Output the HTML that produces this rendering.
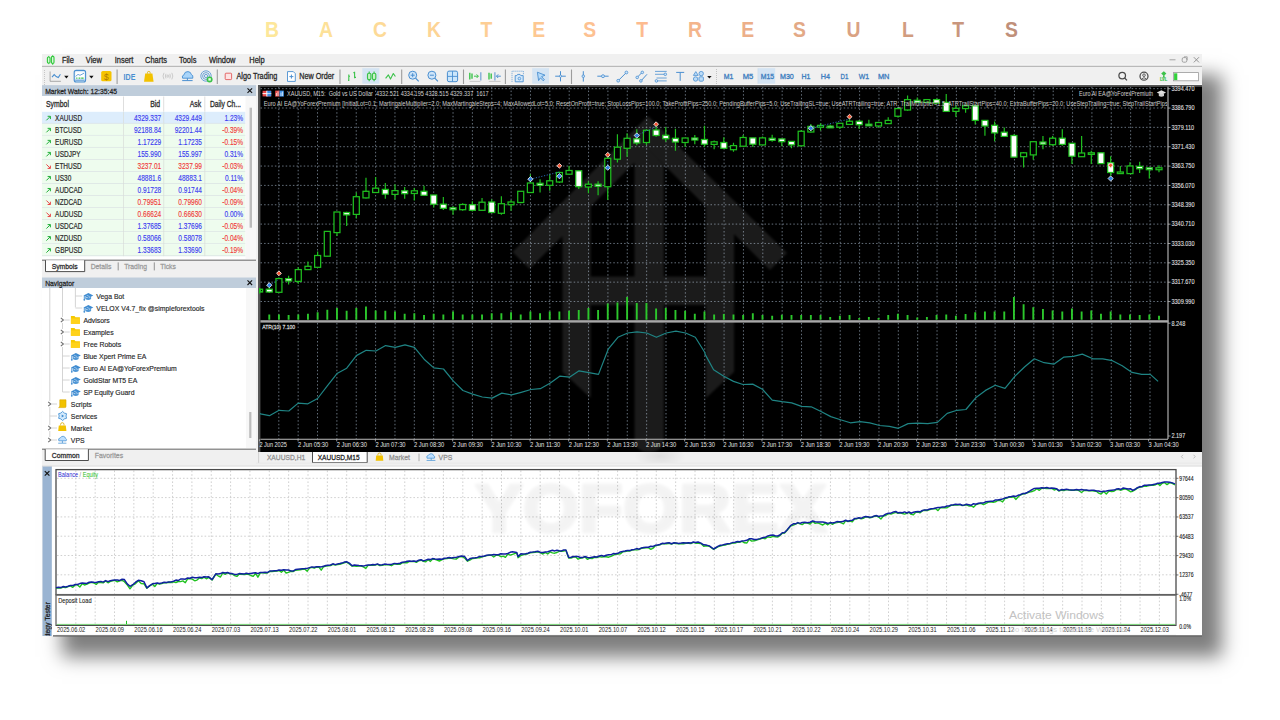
<!DOCTYPE html>
<html><head><meta charset="utf-8"><title>Backtest Results</title>
<style>
html,body{margin:0;padding:0;background:#fff;}
body{width:1280px;height:720px;position:relative;overflow:hidden;font-family:"Liberation Sans",sans-serif;}
#shadow{position:absolute;left:42px;top:54px;width:1160px;height:582px;background:#f0f0f0;box-shadow:20px 21px 18px 0px rgba(0,0,0,0.51);}
svg{position:absolute;left:0;top:0;}
text{font-family:"Liberation Sans",sans-serif;}
</style></head><body>
<div id="shadow"></div>
<svg width="1280" height="720" viewBox="0 0 1280 720">
<text transform="translate(272.05 36.7) scale(0.9 1)" font-size="21.5" font-weight="bold" fill="rgb(253,231,154)" text-anchor="middle">B</text>
<text transform="translate(326.10 36.7) scale(0.9 1)" font-size="21.5" font-weight="bold" fill="rgb(253,225,152)" text-anchor="middle">A</text>
<text transform="translate(379.90 36.7) scale(0.9 1)" font-size="21.5" font-weight="bold" fill="rgb(253,218,151)" text-anchor="middle">C</text>
<text transform="translate(433.95 36.7) scale(0.9 1)" font-size="21.5" font-weight="bold" fill="rgb(253,212,149)" text-anchor="middle">K</text>
<text transform="translate(486.35 36.7) scale(0.9 1)" font-size="21.5" font-weight="bold" fill="rgb(253,206,148)" text-anchor="middle">T</text>
<text transform="translate(538.80 36.7) scale(0.9 1)" font-size="21.5" font-weight="bold" fill="rgb(253,200,146)" text-anchor="middle">E</text>
<text transform="translate(589.60 36.7) scale(0.9 1)" font-size="21.5" font-weight="bold" fill="rgb(253,193,145)" text-anchor="middle">S</text>
<text transform="translate(642.20 36.7) scale(0.9 1)" font-size="21.5" font-weight="bold" fill="rgb(253,187,143)" text-anchor="middle">T</text>
<text transform="translate(695.10 36.7) scale(0.9 1)" font-size="21.5" font-weight="bold" fill="rgb(244,181,140)" text-anchor="middle">R</text>
<text transform="translate(747.75 36.7) scale(0.9 1)" font-size="21.5" font-weight="bold" fill="rgb(236,175,137)" text-anchor="middle">E</text>
<text transform="translate(799.55 36.7) scale(0.9 1)" font-size="21.5" font-weight="bold" fill="rgb(227,169,134)" text-anchor="middle">S</text>
<text transform="translate(853.45 36.7) scale(0.9 1)" font-size="21.5" font-weight="bold" fill="rgb(218,162,131)" text-anchor="middle">U</text>
<text transform="translate(907.90 36.7) scale(0.9 1)" font-size="21.5" font-weight="bold" fill="rgb(209,156,128)" text-anchor="middle">L</text>
<text transform="translate(958.20 36.7) scale(0.9 1)" font-size="21.5" font-weight="bold" fill="rgb(201,150,125)" text-anchor="middle">T</text>
<text transform="translate(1011.50 36.7) scale(0.9 1)" font-size="21.5" font-weight="bold" fill="rgb(192,144,122)" text-anchor="middle">S</text>
<rect x="42.00" y="54.00" width="1160.00" height="12.00" fill="#f0f0f0" />
<line x1="42.00" y1="65.10" x2="1202.00" y2="65.10" stroke="#fafafa" stroke-width="0.90" />
<line x1="42.00" y1="66.40" x2="1202.00" y2="66.40" stroke="#b9b9b9" stroke-width="1.10" />
<rect x="42.00" y="67.00" width="1160.00" height="17.20" fill="#f0f0f0" />
<line x1="42.00" y1="84.40" x2="1202.00" y2="84.40" stroke="#fbfbfb" stroke-width="0.80" />
<line x1="42.00" y1="85.00" x2="256.00" y2="85.00" stroke="#e0e0e0" stroke-width="0.60" />
<g stroke="#2fc93a" stroke-width="1.1" fill="#d9f7da"><rect x="47.4" y="57" width="2.6" height="6" rx="1.1"/><rect x="51.4" y="56.4" width="2.6" height="7" rx="1.1"/></g>
<line x1="48.70" y1="55.90" x2="48.70" y2="57.00" stroke="#2fc93a" stroke-width="0.80" />
<line x1="48.70" y1="63.00" x2="48.70" y2="64.20" stroke="#2fc93a" stroke-width="0.80" />
<line x1="52.70" y1="55.20" x2="52.70" y2="56.40" stroke="#2fc93a" stroke-width="0.80" />
<line x1="52.70" y1="63.40" x2="52.70" y2="65.00" stroke="#2fc93a" stroke-width="0.80" />
<text transform="translate(61.90 63.30) scale(0.900 1)" font-size="8.30" fill="#2a2a2a" text-anchor="start" stroke="#2a2a2a" stroke-width="0.28" >File</text>
<text transform="translate(85.80 63.30) scale(0.900 1)" font-size="8.30" fill="#2a2a2a" text-anchor="start" stroke="#2a2a2a" stroke-width="0.28" >View</text>
<text transform="translate(114.70 63.30) scale(0.900 1)" font-size="8.30" fill="#2a2a2a" text-anchor="start" stroke="#2a2a2a" stroke-width="0.28" >Insert</text>
<text transform="translate(145.00 63.30) scale(0.900 1)" font-size="8.30" fill="#2a2a2a" text-anchor="start" stroke="#2a2a2a" stroke-width="0.28" >Charts</text>
<text transform="translate(179.00 63.30) scale(0.900 1)" font-size="8.30" fill="#2a2a2a" text-anchor="start" stroke="#2a2a2a" stroke-width="0.28" >Tools</text>
<text transform="translate(209.00 63.30) scale(0.900 1)" font-size="8.30" fill="#2a2a2a" text-anchor="start" stroke="#2a2a2a" stroke-width="0.28" >Window</text>
<text transform="translate(249.30 63.30) scale(0.900 1)" font-size="8.30" fill="#2a2a2a" text-anchor="start" stroke="#2a2a2a" stroke-width="0.28" >Help</text>
<line x1="1169.50" y1="59.80" x2="1175.50" y2="59.80" stroke="#9a9a9a" stroke-width="0.90" />
<rect x="1182.2" y="57.6" width="4.6" height="4.6" rx="1.4" fill="none" stroke="#9a9a9a" stroke-width="0.9"/>
<path d="M1184 56.8h3.2v3.4" fill="none" stroke="#9a9a9a" stroke-width="0.8"/>
<line x1="1193.80" y1="57.20" x2="1199.00" y2="62.40" stroke="#8a8a8a" stroke-width="0.90" />
<line x1="1199.00" y1="57.20" x2="1193.80" y2="62.40" stroke="#8a8a8a" stroke-width="0.90" />
<rect x="44.20" y="70.00" width="0.80" height="0.80" fill="#b0b0b0" />
<rect x="44.20" y="72.00" width="0.80" height="0.80" fill="#b0b0b0" />
<rect x="44.20" y="74.00" width="0.80" height="0.80" fill="#b0b0b0" />
<rect x="44.20" y="76.00" width="0.80" height="0.80" fill="#b0b0b0" />
<rect x="44.20" y="78.00" width="0.80" height="0.80" fill="#b0b0b0" />
<rect x="44.20" y="80.00" width="0.80" height="0.80" fill="#b0b0b0" />
<rect x="44.20" y="82.00" width="0.80" height="0.80" fill="#b0b0b0" />
<rect x="44.20" y="84.00" width="0.80" height="0.80" fill="#b0b0b0" />
<path d="M50.1 71.5V81.3H60.9" fill="none" stroke="#8a8a8a" stroke-width="0.7"/>
<path d="M52 77.2L54.2 74.6L56.2 76.6L58.3 77.6L60.4 74.3" fill="none" stroke="#4a8fd0" stroke-width="1.1"/>
<path d="M64.2 75.8h4.4l-2.2 2.6z" fill="#111"/>
<rect x="74.2" y="70.4" width="11.4" height="11.6" rx="2" fill="#dbeaf7" stroke="#4a8fd0" stroke-width="1.1"/>
<rect x="75.40" y="72.20" width="9.00" height="6.40" fill="#ffffff" />
<path d="M75.6 76.4L78 74.4L80 75.3L84 73.2" fill="none" stroke="#4a8fd0" stroke-width="0.8"/>
<path d="M76.2 78.2h1.2M78.6 78.2h1.8M81.2 78.2h2.4" stroke="#3bc24a" stroke-width="1.2"/>
<rect x="75.20" y="79.60" width="9.40" height="1.60" fill="#7fb0e0" />
<path d="M89.2 75.8h4.4l-2.2 2.6z" fill="#111"/>
<rect x="101.2" y="71" width="10.3" height="10.3" rx="1.6" fill="#f5c400"/>
<text x="106.35" y="79.6" font-size="8.5" fill="#b07a00" text-anchor="middle">$</text>
<line x1="117.10" y1="69.50" x2="117.10" y2="84.00" stroke="#9c9c9c" stroke-width="1.10" />
<text transform="translate(123.6 79.6) scale(0.85 1)" font-size="8.3" font-weight="bold" fill="#4a8fd0">IDE</text>
<path d="M145.2 73.6h7.2l1.2 8.2h-9.6z" fill="#f2c200"/>
<path d="M147.4 73.6v-0.8a1.4 1.4 0 0 1 2.8 0v0.8" fill="none" stroke="#dcae00" stroke-width="0.8"/>
<g fill="none" stroke="#c0c0c0" stroke-width="0.8"><path d="M164 72.8q-2 3.2 0 6.6M166 73.8q-1.2 2.2 0 4.6M171.8 72.8q2 3.2 0 6.6M169.8 73.8q1.2 2.2 0 4.6"/><circle cx="167.9" cy="76.1" r="1.1"/></g>
<path d="M182.6 78.2q-1.2-2.6 1.4-3.4q0.6-3.4 4-3.2q2.8 0.2 3.4 3q2 0.4 1.4 3.6z" fill="#a9d5fa" stroke="#4a8fd0" stroke-width="0.9" stroke-linejoin="round"/>
<path d="M187.4 78.2v2.2M182.2 80.6h10.4" stroke="#4a8fd0" stroke-width="1"/>
<g fill="none" stroke="#4a8fd0" stroke-width="0.8"><circle cx="206" cy="76" r="5.2"/><circle cx="206" cy="76" r="3.4"/><circle cx="206" cy="76" r="1.6"/></g>
<circle cx="209.6" cy="79.4" r="3" fill="#3cc24a"/>
<rect x="208.40" y="78.20" width="2.40" height="2.40" fill="#e9ffe9" />
<line x1="217.30" y1="69.50" x2="217.30" y2="84.00" stroke="#9c9c9c" stroke-width="1.10" />
<rect x="225.2" y="73.2" width="6.4" height="6.4" rx="0.8" fill="#fde3e3" stroke="#e25b5b" stroke-width="0.9"/>
<text transform="translate(236.50 79.20) scale(0.890 1)" font-size="8.20" fill="#2a2a2a" text-anchor="start" stroke="#2a2a2a" stroke-width="0.28" >Algo Trading</text>
<path d="M287.5 71.6h5.8l2 2v7.8h-7.8z" fill="#fff" stroke="#4a8fd0" stroke-width="0.9"/>
<path d="M291.4 74.6v4M289.4 76.6h4" stroke="#4a8fd0" stroke-width="1"/>
<text transform="translate(299.20 79.20) scale(0.880 1)" font-size="8.20" fill="#2a2a2a" text-anchor="start" stroke="#2a2a2a" stroke-width="0.28" >New Order</text>
<line x1="340.00" y1="69.50" x2="340.00" y2="84.00" stroke="#9c9c9c" stroke-width="1.10" />
<path d="M348.8 74.5v6.5M348 80.2h0.8M348.8 76.2h1.2M354.6 71.8v6.5M353.4 72.6h1.2M354.6 77.4h1.4" fill="none" stroke="#3bc24a" stroke-width="1.1"/>
<rect x="362.30" y="68.20" width="17.00" height="15.50" fill="#d4e4f3" />
<g fill="#c6f2c8" stroke="#3bc24a" stroke-width="1.15"><rect x="367.5" y="73.2" width="3.4" height="6.4" rx="1.3"/><rect x="372.4" y="73.2" width="3.4" height="6.4" rx="1.3"/></g>
<path d="M369.2 71.6v1.8M369.2 79.6v1.6M374.1 71.6v1.8M374.1 79.6v1.6" stroke="#3bc24a" stroke-width="1.1"/>
<path d="M385.6 78.4L388.4 74.9L390.5 79.1L393.3 73.5L395.4 76.5" fill="none" stroke="#3bc24a" stroke-width="1.1" stroke-linejoin="round"/>
<line x1="401.70" y1="69.50" x2="401.70" y2="84.00" stroke="#9c9c9c" stroke-width="1.10" />
<circle cx="412.7" cy="75.2" r="4" fill="#cfe5f9" stroke="#4a8fd0" stroke-width="1"/>
<path d="M415.6 78.1L418.7 81.4" stroke="#4a8fd0" stroke-width="1.2"/>
<path d="M410.7 75.2h4" stroke="#4a8fd0" stroke-width="1"/>
<path d="M412.7 73.2v4" stroke="#4a8fd0" stroke-width="1"/>
<circle cx="431.9" cy="75.2" r="4" fill="#cfe5f9" stroke="#4a8fd0" stroke-width="1"/>
<path d="M434.8 78.1L437.9 81.4" stroke="#4a8fd0" stroke-width="1.2"/>
<path d="M429.9 75.2h4" stroke="#4a8fd0" stroke-width="1"/>
<rect x="447.4" y="71.1" width="10.2" height="10.6" rx="1.6" fill="#cbe6fb" stroke="#4a8fd0" stroke-width="1"/>
<path d="M452.5 71.1v10.6M447.4 76.4h10.2" stroke="#4a8fd0" stroke-width="0.9"/>
<line x1="463.50" y1="69.50" x2="463.50" y2="84.00" stroke="#9c9c9c" stroke-width="1.10" />
<g stroke="#3bc24a" stroke-width="1.4"><path d="M469.8 72.8v6.6M472 73.6v5.2"/></g>
<path d="M474 76.2h4.2M476.6 74.4l1.8 1.8l-1.8 1.8" fill="none" stroke="#3bc24a" stroke-width="1"/>
<line x1="480.80" y1="72.20" x2="480.80" y2="80.40" stroke="#7aa7d6" stroke-width="1.30" />
<line x1="469.60" y1="81.40" x2="480.40" y2="81.40" stroke="#c8c8c8" stroke-width="1.00" />
<g stroke="#3bc24a" stroke-width="1.4"><path d="M489 72.8v6.6M491.2 73.6v5.2"/></g>
<line x1="494.90" y1="72.20" x2="494.90" y2="80.40" stroke="#7aa7d6" stroke-width="1.30" />
<path d="M500.8 76.2h-4.2M498.2 74.4l-1.8 1.8l1.8 1.8" fill="none" stroke="#4a8fd0" stroke-width="1"/>
<line x1="488.80" y1="81.40" x2="500.60" y2="81.40" stroke="#c8c8c8" stroke-width="1.00" />
<line x1="505.40" y1="69.50" x2="505.40" y2="84.00" stroke="#9c9c9c" stroke-width="1.10" />
<path d="M512 81.8v-10.6h11.4v3" fill="none" stroke="#4a8fd0" stroke-width="0.8" stroke-dasharray="1 1"/>
<path d="M515.2 75.6h1.6l0.8-1.2h2.4l0.8 1.2h2.4v6.2h-8z" fill="#d3e8fb" stroke="#4a8fd0" stroke-width="0.9"/>
<circle cx="519.4" cy="78.6" r="1.3" fill="none" stroke="#4a8fd0" stroke-width="0.8"/>
<rect x="532.20" y="68.20" width="16.80" height="15.50" fill="#d4e4f3" />
<path d="M537.4 72.2L545 75.2L541.6 76.6L544.4 79.8L543.2 80.8L540.4 77.8L538.6 80.6z" fill="#b7dcfa" stroke="#4a8fd0" stroke-width="0.9" stroke-linejoin="round"/>
<path d="M560.5 71.2v10.2M555.2 76.2h10.6" stroke="#4a8fd0" stroke-width="1"/>
<circle cx="560.5" cy="76.2" r="1.1" fill="#f0f0f0" stroke="#4a8fd0" stroke-width="0.8"/>
<line x1="571.50" y1="69.50" x2="571.50" y2="84.00" stroke="#9c9c9c" stroke-width="1.10" />
<line x1="583.30" y1="71.20" x2="583.30" y2="81.60" stroke="#4a8fd0" stroke-width="1.00" />
<circle cx="583.3" cy="76.2" r="1.3" fill="#cfe5f9" stroke="#4a8fd0" stroke-width="0.8"/>
<line x1="597.30" y1="76.20" x2="608.60" y2="76.20" stroke="#4a8fd0" stroke-width="1.00" />
<circle cx="603" cy="76.2" r="1.5" fill="#cfe5f9" stroke="#4a8fd0" stroke-width="0.8"/>
<line x1="618.20" y1="80.70" x2="626.40" y2="72.50" stroke="#4a8fd0" stroke-width="1.00" />
<g fill="#cfe5f9" stroke="#4a8fd0" stroke-width="0.8"><circle cx="618.2" cy="80.7" r="1.4"/><circle cx="626.4" cy="72.5" r="1.4"/></g>
<path d="M637.2 77.4L642.3 72.2M640.9 81L647 74.3" stroke="#4a8fd0" stroke-width="1"/>
<g fill="#cfe5f9" stroke="#4a8fd0" stroke-width="0.8"><circle cx="637.2" cy="77.4" r="1.3"/><circle cx="642.3" cy="72.4" r="1.3"/><circle cx="640.9" cy="80.9" r="1.3"/></g>
<path d="M655 71.4h11.7M655 74.3h10M656.5 78h10.2M656.5 80.9h10.2" stroke="#4a8fd0" stroke-width="0.8"/>
<g fill="#cfe5f9" stroke="#4a8fd0" stroke-width="0.8"><circle cx="665.3" cy="74.3" r="1.3"/><circle cx="656.4" cy="80.9" r="1.3"/></g>
<path d="M676.2 72.4h8M680.2 72.4v8.4" stroke="#4a8fd0" stroke-width="1"/>
<g fill="#bcdcf8" stroke="#4a8fd0" stroke-width="0.8"><path d="M695.8 71.6l2.4 3.8h-4.8z"/><circle cx="701.2" cy="73.6" r="2.2"/><circle cx="695.6" cy="79" r="2.2"/><rect x="699" y="76.8" width="4.4" height="4.4" rx="1"/></g>
<path d="M707.2 76.0h4.4l-2.2 2.6z" fill="#111"/>
<rect x="716.10" y="69.00" width="0.70" height="0.80" fill="#a0a0a0" />
<rect x="716.10" y="71.00" width="0.70" height="0.80" fill="#a0a0a0" />
<rect x="716.10" y="73.00" width="0.70" height="0.80" fill="#a0a0a0" />
<rect x="716.10" y="75.00" width="0.70" height="0.80" fill="#a0a0a0" />
<rect x="716.10" y="77.00" width="0.70" height="0.80" fill="#a0a0a0" />
<rect x="716.10" y="79.00" width="0.70" height="0.80" fill="#a0a0a0" />
<rect x="716.10" y="81.00" width="0.70" height="0.80" fill="#a0a0a0" />
<rect x="716.10" y="83.00" width="0.70" height="0.80" fill="#a0a0a0" />
<rect x="757.90" y="68.20" width="17.30" height="15.50" fill="#d4e4f3" />
<line x1="757.90" y1="68.20" x2="757.90" y2="83.70" stroke="#c8d8e8" stroke-width="0.50" />
<text x="723.70" y="79.3" font-size="8" fill="#3f7fc0" stroke="#3f7fc0" stroke-width="0.35" textLength="9.60" lengthAdjust="spacingAndGlyphs">M1</text>
<text x="742.80" y="79.3" font-size="8" fill="#3f7fc0" stroke="#3f7fc0" stroke-width="0.35" textLength="10.50" lengthAdjust="spacingAndGlyphs">M5</text>
<text x="760.70" y="79.3" font-size="8" fill="#3f7fc0" stroke="#3f7fc0" stroke-width="0.35" textLength="13.30" lengthAdjust="spacingAndGlyphs">M15</text>
<text x="780.00" y="79.3" font-size="8" fill="#3f7fc0" stroke="#3f7fc0" stroke-width="0.35" textLength="13.80" lengthAdjust="spacingAndGlyphs">M30</text>
<text x="801.50" y="79.3" font-size="8" fill="#3f7fc0" stroke="#3f7fc0" stroke-width="0.35" textLength="8.90" lengthAdjust="spacingAndGlyphs">H1</text>
<text x="820.80" y="79.3" font-size="8" fill="#3f7fc0" stroke="#3f7fc0" stroke-width="0.35" textLength="9.20" lengthAdjust="spacingAndGlyphs">H4</text>
<text x="840.50" y="79.3" font-size="8" fill="#3f7fc0" stroke="#3f7fc0" stroke-width="0.35" textLength="7.80" lengthAdjust="spacingAndGlyphs">D1</text>
<text x="858.70" y="79.3" font-size="8" fill="#3f7fc0" stroke="#3f7fc0" stroke-width="0.35" textLength="10.30" lengthAdjust="spacingAndGlyphs">W1</text>
<text x="877.90" y="79.3" font-size="8" fill="#3f7fc0" stroke="#3f7fc0" stroke-width="0.35" textLength="11.50" lengthAdjust="spacingAndGlyphs">MN</text>
<circle cx="1122.2" cy="75.6" r="3.3" fill="none" stroke="#4a4a4a" stroke-width="1.25"/>
<line x1="1124.60" y1="78.00" x2="1127.00" y2="80.40" stroke="#4a4a4a" stroke-width="1.30" />
<circle cx="1144" cy="76.2" r="4.0" fill="none" stroke="#505050" stroke-width="1.3"/>
<circle cx="1144" cy="75.2" r="1.3" fill="none" stroke="#505050" stroke-width="0.9"/>
<path d="M1141.8 78.8q2.2-2.2 4.4 0" fill="none" stroke="#505050" stroke-width="0.9"/>
<path d="M1163.8 71.2l2.6 2.4l-2.6 2.4l-2.6-2.4z" fill="#3cc24a"/>
<rect x="1163.00" y="75.40" width="1.60" height="2.20" fill="#3cc24a" />
<text transform="translate(1160.0 81.0) scale(0.82 1)" font-size="4.8" font-weight="bold" fill="#3cc24a" stroke="#3cc24a" stroke-width="0.2">LVL</text>
<rect x="1173.4" y="72.6" width="25.2" height="8.2" fill="#ffffff" stroke="#9a9a9a" stroke-width="0.8"/>
<rect x="1174.10" y="73.30" width="3.20" height="6.80" fill="#33d13c" />
<rect x="42.00" y="85.20" width="214.00" height="10.80" fill="#bfcddb" />
<text transform="translate(45.20 94.00) scale(0.850 1)" font-size="8.00" fill="#262626" text-anchor="start" stroke="#262626" stroke-width="0.28" >Market Watch: 12:35:45</text>
<path d="M247.5 88.3L252.1 92.9M252.1 88.3L247.5 92.9" stroke="#111" stroke-width="1.10"/>
<rect x="42.00" y="96.00" width="214.00" height="163.60" fill="#ffffff" />
<rect x="42.00" y="96.00" width="203.50" height="15.80" fill="#ffffff" />
<line x1="123.50" y1="96.50" x2="123.50" y2="111.60" stroke="#d6d6d6" stroke-width="0.80" />
<line x1="163.70" y1="96.50" x2="163.70" y2="111.60" stroke="#d6d6d6" stroke-width="0.80" />
<line x1="204.80" y1="96.50" x2="204.80" y2="111.60" stroke="#d6d6d6" stroke-width="0.80" />
<text transform="translate(46.00 107.10) scale(0.840 1)" font-size="8.20" fill="#2a2a2a" text-anchor="start" stroke="#2a2a2a" stroke-width="0.28" >Symbol</text>
<text transform="translate(160.10 107.10) scale(0.840 1)" font-size="8.20" fill="#2a2a2a" text-anchor="end" stroke="#2a2a2a" stroke-width="0.28" >Bid</text>
<text transform="translate(201.20 107.10) scale(0.840 1)" font-size="8.20" fill="#2a2a2a" text-anchor="end" stroke="#2a2a2a" stroke-width="0.28" >Ask</text>
<text transform="translate(209.90 107.10) scale(0.820 1)" font-size="8.20" fill="#2a2a2a" text-anchor="start" stroke="#2a2a2a" stroke-width="0.28" >Daily Ch...</text>
<rect x="42.00" y="111.80" width="203.50" height="12.03" fill="#ddedfc" />
<line x1="42.00" y1="123.40" x2="245.50" y2="123.40" stroke="#d9dfe3" stroke-width="0.70" />
<line x1="123.50" y1="111.80" x2="123.50" y2="123.80" stroke="#d8ddd8" stroke-width="0.70" />
<line x1="163.70" y1="111.80" x2="163.70" y2="123.80" stroke="#d8ddd8" stroke-width="0.70" />
<line x1="204.80" y1="111.80" x2="204.80" y2="123.80" stroke="#d8ddd8" stroke-width="0.70" />
<path d="M46.4 120.30L50.2 116.50M47.6 116.30h2.8v2.8" fill="none" stroke="#22b03a" stroke-width="1"/>
<text transform="translate(55.10 120.90) scale(0.790 1)" font-size="8.20" fill="#2c2c2c" text-anchor="start" stroke="#2c2c2c" stroke-width="0.20" >XAUUSD</text>
<text transform="translate(161.20 120.90) scale(0.800 1)" font-size="8.20" fill="#3d3df0" text-anchor="end" stroke="#3d3df0" stroke-width="0.14" >4329.337</text>
<text transform="translate(202.00 120.90) scale(0.800 1)" font-size="8.20" fill="#3d3df0" text-anchor="end" stroke="#3d3df0" stroke-width="0.14" >4329.449</text>
<text transform="translate(243.00 120.90) scale(0.800 1)" font-size="8.20" fill="#3d3df0" text-anchor="end" stroke="#3d3df0" stroke-width="0.14" >1.23%</text>
<rect x="42.00" y="123.83" width="203.50" height="12.03" fill="#eefcee" />
<line x1="42.00" y1="135.43" x2="245.50" y2="135.43" stroke="#d9dfe3" stroke-width="0.70" />
<line x1="123.50" y1="123.83" x2="123.50" y2="135.83" stroke="#d8ddd8" stroke-width="0.70" />
<line x1="163.70" y1="123.83" x2="163.70" y2="135.83" stroke="#d8ddd8" stroke-width="0.70" />
<line x1="204.80" y1="123.83" x2="204.80" y2="135.83" stroke="#d8ddd8" stroke-width="0.70" />
<path d="M46.4 132.33L50.2 128.53M47.6 128.33h2.8v2.8" fill="none" stroke="#22b03a" stroke-width="1"/>
<text transform="translate(55.10 132.93) scale(0.790 1)" font-size="8.20" fill="#2c2c2c" text-anchor="start" stroke="#2c2c2c" stroke-width="0.20" >BTCUSD</text>
<text transform="translate(161.20 132.93) scale(0.800 1)" font-size="8.20" fill="#3d3df0" text-anchor="end" stroke="#3d3df0" stroke-width="0.14" >92188.84</text>
<text transform="translate(202.00 132.93) scale(0.800 1)" font-size="8.20" fill="#3d3df0" text-anchor="end" stroke="#3d3df0" stroke-width="0.14" >92201.44</text>
<text transform="translate(243.00 132.93) scale(0.800 1)" font-size="8.20" fill="#f03c3c" text-anchor="end" stroke="#f03c3c" stroke-width="0.14" >-0.39%</text>
<rect x="42.00" y="135.86" width="203.50" height="12.03" fill="#eefcee" />
<line x1="42.00" y1="147.46" x2="245.50" y2="147.46" stroke="#d9dfe3" stroke-width="0.70" />
<line x1="123.50" y1="135.86" x2="123.50" y2="147.86" stroke="#d8ddd8" stroke-width="0.70" />
<line x1="163.70" y1="135.86" x2="163.70" y2="147.86" stroke="#d8ddd8" stroke-width="0.70" />
<line x1="204.80" y1="135.86" x2="204.80" y2="147.86" stroke="#d8ddd8" stroke-width="0.70" />
<path d="M46.4 144.36L50.2 140.56M47.6 140.36h2.8v2.8" fill="none" stroke="#22b03a" stroke-width="1"/>
<text transform="translate(55.10 144.96) scale(0.790 1)" font-size="8.20" fill="#2c2c2c" text-anchor="start" stroke="#2c2c2c" stroke-width="0.20" >EURUSD</text>
<text transform="translate(161.20 144.96) scale(0.800 1)" font-size="8.20" fill="#3d3df0" text-anchor="end" stroke="#3d3df0" stroke-width="0.14" >1.17229</text>
<text transform="translate(202.00 144.96) scale(0.800 1)" font-size="8.20" fill="#3d3df0" text-anchor="end" stroke="#3d3df0" stroke-width="0.14" >1.17235</text>
<text transform="translate(243.00 144.96) scale(0.800 1)" font-size="8.20" fill="#f03c3c" text-anchor="end" stroke="#f03c3c" stroke-width="0.14" >-0.15%</text>
<rect x="42.00" y="147.89" width="203.50" height="12.03" fill="#eefcee" />
<line x1="42.00" y1="159.49" x2="245.50" y2="159.49" stroke="#d9dfe3" stroke-width="0.70" />
<line x1="123.50" y1="147.89" x2="123.50" y2="159.89" stroke="#d8ddd8" stroke-width="0.70" />
<line x1="163.70" y1="147.89" x2="163.70" y2="159.89" stroke="#d8ddd8" stroke-width="0.70" />
<line x1="204.80" y1="147.89" x2="204.80" y2="159.89" stroke="#d8ddd8" stroke-width="0.70" />
<path d="M46.4 156.39L50.2 152.59M47.6 152.39h2.8v2.8" fill="none" stroke="#22b03a" stroke-width="1"/>
<text transform="translate(55.10 156.99) scale(0.790 1)" font-size="8.20" fill="#2c2c2c" text-anchor="start" stroke="#2c2c2c" stroke-width="0.20" >USDJPY</text>
<text transform="translate(161.20 156.99) scale(0.800 1)" font-size="8.20" fill="#3d3df0" text-anchor="end" stroke="#3d3df0" stroke-width="0.14" >155.990</text>
<text transform="translate(202.00 156.99) scale(0.800 1)" font-size="8.20" fill="#3d3df0" text-anchor="end" stroke="#3d3df0" stroke-width="0.14" >155.997</text>
<text transform="translate(243.00 156.99) scale(0.800 1)" font-size="8.20" fill="#3d3df0" text-anchor="end" stroke="#3d3df0" stroke-width="0.14" >0.31%</text>
<rect x="42.00" y="159.92" width="203.50" height="12.03" fill="#eefcee" />
<line x1="42.00" y1="171.52" x2="245.50" y2="171.52" stroke="#d9dfe3" stroke-width="0.70" />
<line x1="123.50" y1="159.92" x2="123.50" y2="171.92" stroke="#d8ddd8" stroke-width="0.70" />
<line x1="163.70" y1="159.92" x2="163.70" y2="171.92" stroke="#d8ddd8" stroke-width="0.70" />
<line x1="204.80" y1="159.92" x2="204.80" y2="171.92" stroke="#d8ddd8" stroke-width="0.70" />
<path d="M46.4 164.42L50.2 168.22M50.4 168.42v-2.8M50.4 168.42h-2.8" fill="none" stroke="#e94848" stroke-width="1"/>
<text transform="translate(55.10 169.02) scale(0.790 1)" font-size="8.20" fill="#2c2c2c" text-anchor="start" stroke="#2c2c2c" stroke-width="0.20" >ETHUSD</text>
<text transform="translate(161.20 169.02) scale(0.800 1)" font-size="8.20" fill="#f03c3c" text-anchor="end" stroke="#f03c3c" stroke-width="0.14" >3237.01</text>
<text transform="translate(202.00 169.02) scale(0.800 1)" font-size="8.20" fill="#f03c3c" text-anchor="end" stroke="#f03c3c" stroke-width="0.14" >3237.99</text>
<text transform="translate(243.00 169.02) scale(0.800 1)" font-size="8.20" fill="#f03c3c" text-anchor="end" stroke="#f03c3c" stroke-width="0.14" >-0.03%</text>
<rect x="42.00" y="171.95" width="203.50" height="12.03" fill="#eefcee" />
<line x1="42.00" y1="183.55" x2="245.50" y2="183.55" stroke="#d9dfe3" stroke-width="0.70" />
<line x1="123.50" y1="171.95" x2="123.50" y2="183.95" stroke="#d8ddd8" stroke-width="0.70" />
<line x1="163.70" y1="171.95" x2="163.70" y2="183.95" stroke="#d8ddd8" stroke-width="0.70" />
<line x1="204.80" y1="171.95" x2="204.80" y2="183.95" stroke="#d8ddd8" stroke-width="0.70" />
<path d="M46.4 180.45L50.2 176.65M47.6 176.45h2.8v2.8" fill="none" stroke="#22b03a" stroke-width="1"/>
<text transform="translate(55.10 181.05) scale(0.790 1)" font-size="8.20" fill="#2c2c2c" text-anchor="start" stroke="#2c2c2c" stroke-width="0.20" >US30</text>
<text transform="translate(161.20 181.05) scale(0.800 1)" font-size="8.20" fill="#3d3df0" text-anchor="end" stroke="#3d3df0" stroke-width="0.14" >48881.6</text>
<text transform="translate(202.00 181.05) scale(0.800 1)" font-size="8.20" fill="#3d3df0" text-anchor="end" stroke="#3d3df0" stroke-width="0.14" >48883.1</text>
<text transform="translate(243.00 181.05) scale(0.800 1)" font-size="8.20" fill="#3d3df0" text-anchor="end" stroke="#3d3df0" stroke-width="0.14" >0.11%</text>
<rect x="42.00" y="183.98" width="203.50" height="12.03" fill="#eefcee" />
<line x1="42.00" y1="195.58" x2="245.50" y2="195.58" stroke="#d9dfe3" stroke-width="0.70" />
<line x1="123.50" y1="183.98" x2="123.50" y2="195.98" stroke="#d8ddd8" stroke-width="0.70" />
<line x1="163.70" y1="183.98" x2="163.70" y2="195.98" stroke="#d8ddd8" stroke-width="0.70" />
<line x1="204.80" y1="183.98" x2="204.80" y2="195.98" stroke="#d8ddd8" stroke-width="0.70" />
<path d="M46.4 192.48L50.2 188.68M47.6 188.48h2.8v2.8" fill="none" stroke="#22b03a" stroke-width="1"/>
<text transform="translate(55.10 193.08) scale(0.790 1)" font-size="8.20" fill="#2c2c2c" text-anchor="start" stroke="#2c2c2c" stroke-width="0.20" >AUDCAD</text>
<text transform="translate(161.20 193.08) scale(0.800 1)" font-size="8.20" fill="#3d3df0" text-anchor="end" stroke="#3d3df0" stroke-width="0.14" >0.91728</text>
<text transform="translate(202.00 193.08) scale(0.800 1)" font-size="8.20" fill="#3d3df0" text-anchor="end" stroke="#3d3df0" stroke-width="0.14" >0.91744</text>
<text transform="translate(243.00 193.08) scale(0.800 1)" font-size="8.20" fill="#f03c3c" text-anchor="end" stroke="#f03c3c" stroke-width="0.14" >-0.04%</text>
<rect x="42.00" y="196.01" width="203.50" height="12.03" fill="#eefcee" />
<line x1="42.00" y1="207.61" x2="245.50" y2="207.61" stroke="#d9dfe3" stroke-width="0.70" />
<line x1="123.50" y1="196.01" x2="123.50" y2="208.01" stroke="#d8ddd8" stroke-width="0.70" />
<line x1="163.70" y1="196.01" x2="163.70" y2="208.01" stroke="#d8ddd8" stroke-width="0.70" />
<line x1="204.80" y1="196.01" x2="204.80" y2="208.01" stroke="#d8ddd8" stroke-width="0.70" />
<path d="M46.4 200.51L50.2 204.31M50.4 204.51v-2.8M50.4 204.51h-2.8" fill="none" stroke="#e94848" stroke-width="1"/>
<text transform="translate(55.10 205.11) scale(0.790 1)" font-size="8.20" fill="#2c2c2c" text-anchor="start" stroke="#2c2c2c" stroke-width="0.20" >NZDCAD</text>
<text transform="translate(161.20 205.11) scale(0.800 1)" font-size="8.20" fill="#f03c3c" text-anchor="end" stroke="#f03c3c" stroke-width="0.14" >0.79951</text>
<text transform="translate(202.00 205.11) scale(0.800 1)" font-size="8.20" fill="#f03c3c" text-anchor="end" stroke="#f03c3c" stroke-width="0.14" >0.79960</text>
<text transform="translate(243.00 205.11) scale(0.800 1)" font-size="8.20" fill="#f03c3c" text-anchor="end" stroke="#f03c3c" stroke-width="0.14" >-0.09%</text>
<rect x="42.00" y="208.04" width="203.50" height="12.03" fill="#eefcee" />
<line x1="42.00" y1="219.64" x2="245.50" y2="219.64" stroke="#d9dfe3" stroke-width="0.70" />
<line x1="123.50" y1="208.04" x2="123.50" y2="220.04" stroke="#d8ddd8" stroke-width="0.70" />
<line x1="163.70" y1="208.04" x2="163.70" y2="220.04" stroke="#d8ddd8" stroke-width="0.70" />
<line x1="204.80" y1="208.04" x2="204.80" y2="220.04" stroke="#d8ddd8" stroke-width="0.70" />
<path d="M46.4 212.54L50.2 216.34M50.4 216.54v-2.8M50.4 216.54h-2.8" fill="none" stroke="#e94848" stroke-width="1"/>
<text transform="translate(55.10 217.14) scale(0.790 1)" font-size="8.20" fill="#2c2c2c" text-anchor="start" stroke="#2c2c2c" stroke-width="0.20" >AUDUSD</text>
<text transform="translate(161.20 217.14) scale(0.800 1)" font-size="8.20" fill="#f03c3c" text-anchor="end" stroke="#f03c3c" stroke-width="0.14" >0.66624</text>
<text transform="translate(202.00 217.14) scale(0.800 1)" font-size="8.20" fill="#f03c3c" text-anchor="end" stroke="#f03c3c" stroke-width="0.14" >0.66630</text>
<text transform="translate(243.00 217.14) scale(0.800 1)" font-size="8.20" fill="#3d3df0" text-anchor="end" stroke="#3d3df0" stroke-width="0.14" >0.00%</text>
<rect x="42.00" y="220.07" width="203.50" height="12.03" fill="#eefcee" />
<line x1="42.00" y1="231.67" x2="245.50" y2="231.67" stroke="#d9dfe3" stroke-width="0.70" />
<line x1="123.50" y1="220.07" x2="123.50" y2="232.07" stroke="#d8ddd8" stroke-width="0.70" />
<line x1="163.70" y1="220.07" x2="163.70" y2="232.07" stroke="#d8ddd8" stroke-width="0.70" />
<line x1="204.80" y1="220.07" x2="204.80" y2="232.07" stroke="#d8ddd8" stroke-width="0.70" />
<path d="M46.4 228.57L50.2 224.77M47.6 224.57h2.8v2.8" fill="none" stroke="#22b03a" stroke-width="1"/>
<text transform="translate(55.10 229.17) scale(0.790 1)" font-size="8.20" fill="#2c2c2c" text-anchor="start" stroke="#2c2c2c" stroke-width="0.20" >USDCAD</text>
<text transform="translate(161.20 229.17) scale(0.800 1)" font-size="8.20" fill="#3d3df0" text-anchor="end" stroke="#3d3df0" stroke-width="0.14" >1.37685</text>
<text transform="translate(202.00 229.17) scale(0.800 1)" font-size="8.20" fill="#3d3df0" text-anchor="end" stroke="#3d3df0" stroke-width="0.14" >1.37696</text>
<text transform="translate(243.00 229.17) scale(0.800 1)" font-size="8.20" fill="#f03c3c" text-anchor="end" stroke="#f03c3c" stroke-width="0.14" >-0.05%</text>
<rect x="42.00" y="232.10" width="203.50" height="12.03" fill="#eefcee" />
<line x1="42.00" y1="243.70" x2="245.50" y2="243.70" stroke="#d9dfe3" stroke-width="0.70" />
<line x1="123.50" y1="232.10" x2="123.50" y2="244.10" stroke="#d8ddd8" stroke-width="0.70" />
<line x1="163.70" y1="232.10" x2="163.70" y2="244.10" stroke="#d8ddd8" stroke-width="0.70" />
<line x1="204.80" y1="232.10" x2="204.80" y2="244.10" stroke="#d8ddd8" stroke-width="0.70" />
<path d="M46.4 240.60L50.2 236.80M47.6 236.60h2.8v2.8" fill="none" stroke="#22b03a" stroke-width="1"/>
<text transform="translate(55.10 241.20) scale(0.790 1)" font-size="8.20" fill="#2c2c2c" text-anchor="start" stroke="#2c2c2c" stroke-width="0.20" >NZDUSD</text>
<text transform="translate(161.20 241.20) scale(0.800 1)" font-size="8.20" fill="#3d3df0" text-anchor="end" stroke="#3d3df0" stroke-width="0.14" >0.58066</text>
<text transform="translate(202.00 241.20) scale(0.800 1)" font-size="8.20" fill="#3d3df0" text-anchor="end" stroke="#3d3df0" stroke-width="0.14" >0.58078</text>
<text transform="translate(243.00 241.20) scale(0.800 1)" font-size="8.20" fill="#f03c3c" text-anchor="end" stroke="#f03c3c" stroke-width="0.14" >-0.04%</text>
<rect x="42.00" y="244.13" width="203.50" height="12.03" fill="#eefcee" />
<line x1="42.00" y1="255.73" x2="245.50" y2="255.73" stroke="#d9dfe3" stroke-width="0.70" />
<line x1="123.50" y1="244.13" x2="123.50" y2="256.13" stroke="#d8ddd8" stroke-width="0.70" />
<line x1="163.70" y1="244.13" x2="163.70" y2="256.13" stroke="#d8ddd8" stroke-width="0.70" />
<line x1="204.80" y1="244.13" x2="204.80" y2="256.13" stroke="#d8ddd8" stroke-width="0.70" />
<path d="M46.4 252.63L50.2 248.83M47.6 248.63h2.8v2.8" fill="none" stroke="#22b03a" stroke-width="1"/>
<text transform="translate(55.10 253.23) scale(0.790 1)" font-size="8.20" fill="#2c2c2c" text-anchor="start" stroke="#2c2c2c" stroke-width="0.20" >GBPUSD</text>
<text transform="translate(161.20 253.23) scale(0.800 1)" font-size="8.20" fill="#3d3df0" text-anchor="end" stroke="#3d3df0" stroke-width="0.14" >1.33683</text>
<text transform="translate(202.00 253.23) scale(0.800 1)" font-size="8.20" fill="#3d3df0" text-anchor="end" stroke="#3d3df0" stroke-width="0.14" >1.33690</text>
<text transform="translate(243.00 253.23) scale(0.800 1)" font-size="8.20" fill="#f03c3c" text-anchor="end" stroke="#f03c3c" stroke-width="0.14" >-0.19%</text>
<rect x="249.60" y="107.70" width="2.40" height="120.00" fill="#c8c8c8" />
<rect x="245.50" y="96.00" width="10.50" height="163.60" fill="#f7f7f7" />
<rect x="249.60" y="107.70" width="2.40" height="120.00" fill="#bcbcbc" />
<rect x="42.00" y="259.60" width="214.00" height="14.00" fill="#f0f0f0" />
<line x1="42.00" y1="260.20" x2="256.00" y2="260.20" stroke="#5a5a5a" stroke-width="0.90" />
<path d="M45.5 260.2V271.6H84.7V260.2" fill="#ffffff" stroke="#3a3a3a" stroke-width="0.9"/>
<text transform="translate(51.70 268.70) scale(0.850 1)" font-size="8.00" fill="#2a2a2a" text-anchor="start" stroke="#2a2a2a" stroke-width="0.28" >Symbols</text>
<text transform="translate(90.70 268.70) scale(0.850 1)" font-size="8.00" fill="#9a9a9a" text-anchor="start" stroke="#9a9a9a" stroke-width="0.28" >Details</text>
<line x1="118.20" y1="262.40" x2="118.20" y2="270.40" stroke="#7a7a7a" stroke-width="0.80" />
<text transform="translate(124.20 268.70) scale(0.850 1)" font-size="8.00" fill="#9a9a9a" text-anchor="start" stroke="#9a9a9a" stroke-width="0.28" >Trading</text>
<line x1="154.30" y1="262.40" x2="154.30" y2="270.40" stroke="#7a7a7a" stroke-width="0.80" />
<text transform="translate(160.30 268.70) scale(0.850 1)" font-size="8.00" fill="#9a9a9a" text-anchor="start" stroke="#9a9a9a" stroke-width="0.28" >Ticks</text>
<rect x="42.00" y="277.50" width="214.00" height="10.50" fill="#bfcddb" />
<text transform="translate(45.20 286.20) scale(0.850 1)" font-size="8.00" fill="#262626" text-anchor="start" stroke="#262626" stroke-width="0.28" >Navigator</text>
<path d="M247.5 280.4L252.1 285.0M252.1 280.4L247.5 285.0" stroke="#111" stroke-width="1.10"/>
<rect x="42.00" y="288.00" width="214.00" height="160.50" fill="#ffffff" />
<rect x="246.00" y="288.00" width="10.00" height="160.50" fill="#f7f7f7" />
<rect x="249.20" y="412.00" width="2.20" height="26.00" fill="#bcbcbc" />
<line x1="49.8" y1="288.0" x2="49.8" y2="440.0" stroke="#cfcfcf" stroke-width="0.9"/>
<line x1="62.5" y1="288.0" x2="62.5" y2="392.0" stroke="#cfcfcf" stroke-width="0.9"/>
<line x1="75.4" y1="288.0" x2="75.4" y2="307.4" stroke="#cfcfcf" stroke-width="0.9"/>
<line x1="75.4" y1="296.0" x2="82.2" y2="296.0" stroke="#cfcfcf" stroke-width="0.9"/>
<path d="M85.3 296.4q2.8 3 5.8 0v2.6q-2.9 2.2-5.8 0z" fill="#4f97d6"/>
<path d="M83.5 295.4l4.9-2.5l4.9 2.5l-4.9 2.5z" fill="#3f8bd0"/>
<path d="M86.6 295.2l3.2 1.5" stroke="#cfe6fa" stroke-width="0.6"/>
<line x1="84.30" y1="295.60" x2="84.30" y2="299.60" stroke="#3f8bd0" stroke-width="0.90" />
<circle cx="84.3" cy="299.8" r="0.9" fill="#3f8bd0"/>
<text transform="translate(96.30 298.60) scale(0.860 1)" font-size="8.00" fill="#2a2a2a" text-anchor="start" stroke="#2a2a2a" stroke-width="0.18" >Vega Bot</text>
<line x1="75.4" y1="308.0" x2="82.2" y2="308.0" stroke="#cfcfcf" stroke-width="0.9"/>
<path d="M85.3 308.4q2.8 3 5.8 0v2.6q-2.9 2.2-5.8 0z" fill="#4f97d6"/>
<path d="M83.5 307.4l4.9-2.5l4.9 2.5l-4.9 2.5z" fill="#3f8bd0"/>
<path d="M86.6 307.2l3.2 1.5" stroke="#cfe6fa" stroke-width="0.6"/>
<line x1="84.30" y1="307.60" x2="84.30" y2="311.60" stroke="#3f8bd0" stroke-width="0.90" />
<circle cx="84.3" cy="311.8" r="0.9" fill="#3f8bd0"/>
<text transform="translate(96.30 310.60) scale(0.860 1)" font-size="8.00" fill="#2a2a2a" text-anchor="start" stroke="#2a2a2a" stroke-width="0.18" >VELOX V4.7_fix @simpleforextools</text>
<line x1="62.5" y1="320.0" x2="69.7" y2="320.0" stroke="#cfcfcf" stroke-width="0.9"/>
<rect x="60.00" y="317.00" width="4.40" height="6.00" fill="#ffffff" />
<path d="M60.8 317.9l2.6 2.1l-2.6 2.1" fill="none" stroke="#707070" stroke-width="1.1"/>
<path d="M70.9 316.0h3.6l1 1.2h4.4v6.6h-9z" fill="#f5c800"/>
<rect x="70.90" y="318.40" width="9.00" height="5.40" fill="#ffd21a" />
<text transform="translate(83.40 322.60) scale(0.860 1)" font-size="8.00" fill="#2a2a2a" text-anchor="start" stroke="#2a2a2a" stroke-width="0.18" >Advisors</text>
<line x1="62.5" y1="332.0" x2="69.7" y2="332.0" stroke="#cfcfcf" stroke-width="0.9"/>
<rect x="60.00" y="329.00" width="4.40" height="6.00" fill="#ffffff" />
<path d="M60.8 329.9l2.6 2.1l-2.6 2.1" fill="none" stroke="#707070" stroke-width="1.1"/>
<path d="M70.9 328.0h3.6l1 1.2h4.4v6.6h-9z" fill="#f5c800"/>
<rect x="70.90" y="330.40" width="9.00" height="5.40" fill="#ffd21a" />
<text transform="translate(83.40 334.60) scale(0.860 1)" font-size="8.00" fill="#2a2a2a" text-anchor="start" stroke="#2a2a2a" stroke-width="0.18" >Examples</text>
<line x1="62.5" y1="344.0" x2="69.7" y2="344.0" stroke="#cfcfcf" stroke-width="0.9"/>
<rect x="60.00" y="341.00" width="4.40" height="6.00" fill="#ffffff" />
<path d="M60.8 341.9l2.6 2.1l-2.6 2.1" fill="none" stroke="#707070" stroke-width="1.1"/>
<path d="M70.9 340.0h3.6l1 1.2h4.4v6.6h-9z" fill="#f5c800"/>
<rect x="70.90" y="342.40" width="9.00" height="5.40" fill="#ffd21a" />
<text transform="translate(83.40 346.60) scale(0.860 1)" font-size="8.00" fill="#2a2a2a" text-anchor="start" stroke="#2a2a2a" stroke-width="0.18" >Free Robots</text>
<line x1="62.5" y1="356.0" x2="69.7" y2="356.0" stroke="#cfcfcf" stroke-width="0.9"/>
<path d="M72.8 356.4q2.8 3 5.8 0v2.6q-2.9 2.2-5.8 0z" fill="#4f97d6"/>
<path d="M71.0 355.4l4.9-2.5l4.9 2.5l-4.9 2.5z" fill="#3f8bd0"/>
<path d="M74.1 355.2l3.2 1.5" stroke="#cfe6fa" stroke-width="0.6"/>
<line x1="71.80" y1="355.60" x2="71.80" y2="359.60" stroke="#3f8bd0" stroke-width="0.90" />
<circle cx="71.8" cy="359.8" r="0.9" fill="#3f8bd0"/>
<text transform="translate(83.40 358.60) scale(0.860 1)" font-size="8.00" fill="#2a2a2a" text-anchor="start" stroke="#2a2a2a" stroke-width="0.18" >Blue Xpert Prime EA</text>
<line x1="62.5" y1="368.0" x2="69.7" y2="368.0" stroke="#cfcfcf" stroke-width="0.9"/>
<path d="M72.8 368.4q2.8 3 5.8 0v2.6q-2.9 2.2-5.8 0z" fill="#4f97d6"/>
<path d="M71.0 367.4l4.9-2.5l4.9 2.5l-4.9 2.5z" fill="#3f8bd0"/>
<path d="M74.1 367.2l3.2 1.5" stroke="#cfe6fa" stroke-width="0.6"/>
<line x1="71.80" y1="367.60" x2="71.80" y2="371.60" stroke="#3f8bd0" stroke-width="0.90" />
<circle cx="71.8" cy="371.8" r="0.9" fill="#3f8bd0"/>
<text transform="translate(83.40 370.60) scale(0.860 1)" font-size="8.00" fill="#2a2a2a" text-anchor="start" stroke="#2a2a2a" stroke-width="0.18" >Euro AI EA@YoForexPremium</text>
<line x1="62.5" y1="380.0" x2="69.7" y2="380.0" stroke="#cfcfcf" stroke-width="0.9"/>
<path d="M72.8 380.4q2.8 3 5.8 0v2.6q-2.9 2.2-5.8 0z" fill="#4f97d6"/>
<path d="M71.0 379.4l4.9-2.5l4.9 2.5l-4.9 2.5z" fill="#3f8bd0"/>
<path d="M74.1 379.2l3.2 1.5" stroke="#cfe6fa" stroke-width="0.6"/>
<line x1="71.80" y1="379.60" x2="71.80" y2="383.60" stroke="#3f8bd0" stroke-width="0.90" />
<circle cx="71.8" cy="383.8" r="0.9" fill="#3f8bd0"/>
<text transform="translate(83.40 382.60) scale(0.860 1)" font-size="8.00" fill="#2a2a2a" text-anchor="start" stroke="#2a2a2a" stroke-width="0.18" >GoldStar MT5 EA</text>
<line x1="62.5" y1="392.0" x2="69.7" y2="392.0" stroke="#cfcfcf" stroke-width="0.9"/>
<path d="M72.8 392.4q2.8 3 5.8 0v2.6q-2.9 2.2-5.8 0z" fill="#4f97d6"/>
<path d="M71.0 391.4l4.9-2.5l4.9 2.5l-4.9 2.5z" fill="#3f8bd0"/>
<path d="M74.1 391.2l3.2 1.5" stroke="#cfe6fa" stroke-width="0.6"/>
<line x1="71.80" y1="391.60" x2="71.80" y2="395.60" stroke="#3f8bd0" stroke-width="0.90" />
<circle cx="71.8" cy="395.8" r="0.9" fill="#3f8bd0"/>
<text transform="translate(83.40 394.60) scale(0.860 1)" font-size="8.00" fill="#2a2a2a" text-anchor="start" stroke="#2a2a2a" stroke-width="0.18" >SP Equity Guard</text>
<line x1="49.8" y1="404.0" x2="57.0" y2="404.0" stroke="#cfcfcf" stroke-width="0.9"/>
<rect x="47.40" y="401.00" width="4.40" height="6.00" fill="#ffffff" />
<path d="M48.2 401.9l2.6 2.1l-2.6 2.1" fill="none" stroke="#707070" stroke-width="1.1"/>
<path d="M59.8 399.8h6.2v6.6q0 1.2-1.2 1.2h-6.2q1.2-0.4 1.2-1.6z" fill="#f2c200" stroke="#d9a800" stroke-width="0.6"/>
<text transform="translate(70.80 406.60) scale(0.860 1)" font-size="8.00" fill="#2a2a2a" text-anchor="start" stroke="#2a2a2a" stroke-width="0.18" >Scripts</text>
<line x1="49.8" y1="416.0" x2="57.0" y2="416.0" stroke="#cfcfcf" stroke-width="0.9"/>
<polygon points="62.60,411.40 64.30,413.06 66.58,413.70 66.00,416.00 66.58,418.30 64.30,418.94 62.60,420.60 60.90,418.94 58.62,418.30 59.20,416.00 58.62,413.70 60.90,413.06" fill="#d4eafc" stroke="#4b95d6" stroke-width="0.9" stroke-linejoin="round"/>
<path d="M61.7 414.5l2.4 1.5l-2.4 1.5z" fill="#3f8bd0"/>
<text transform="translate(70.80 418.60) scale(0.860 1)" font-size="8.00" fill="#2a2a2a" text-anchor="start" stroke="#2a2a2a" stroke-width="0.18" >Services</text>
<line x1="49.8" y1="428.0" x2="57.0" y2="428.0" stroke="#cfcfcf" stroke-width="0.9"/>
<rect x="47.40" y="425.00" width="4.40" height="6.00" fill="#ffffff" />
<path d="M48.2 425.9l2.6 2.1l-2.6 2.1" fill="none" stroke="#707070" stroke-width="1.1"/>
<path d="M58.8 425.4h7l0.6 5.6h-8.2z" fill="#f2c200"/>
<path d="M60.6 425.4v-1a1.7 1.7 0 0 1 3.4 0v1" fill="none" stroke="#d8a800" stroke-width="0.8"/>
<text transform="translate(70.80 430.60) scale(0.860 1)" font-size="8.00" fill="#2a2a2a" text-anchor="start" stroke="#2a2a2a" stroke-width="0.18" >Market</text>
<line x1="49.8" y1="440.0" x2="57.0" y2="440.0" stroke="#cfcfcf" stroke-width="0.9"/>
<rect x="47.40" y="437.00" width="4.40" height="6.00" fill="#ffffff" />
<path d="M48.2 437.9l2.6 2.1l-2.6 2.1" fill="none" stroke="#707070" stroke-width="1.1"/>
<path d="M58.8 440.8a2.2 2.2 0 0 1 1.6-3a2.8 2.8 0 0 1 5.2 0.6a1.7 1.7 0 0 1 0.6 2.4z" fill="#bfe0ff" stroke="#4b95d6" stroke-width="0.8"/>
<path d="M62.4 440.8v2.2M58.2 443.2h8.2" stroke="#4b95d6" stroke-width="0.8"/>
<text transform="translate(70.80 442.60) scale(0.860 1)" font-size="8.00" fill="#2a2a2a" text-anchor="start" stroke="#2a2a2a" stroke-width="0.18" >VPS</text>
<rect x="42.00" y="448.60" width="214.00" height="14.00" fill="#f0f0f0" />
<line x1="42.00" y1="449.20" x2="256.00" y2="449.20" stroke="#5a5a5a" stroke-width="0.90" />
<path d="M45.2 449.2V460.5H88.4V449.2" fill="#ffffff" stroke="#3a3a3a" stroke-width="0.9"/>
<text transform="translate(51.80 457.60) scale(0.860 1)" font-size="8.00" fill="#2a2a2a" text-anchor="start" stroke="#2a2a2a" stroke-width="0.28" >Common</text>
<text transform="translate(94.80 457.60) scale(0.860 1)" font-size="8.00" fill="#9a9a9a" text-anchor="start" stroke="#9a9a9a" stroke-width="0.28" >Favorites</text>
<rect x="256.00" y="85.00" width="2.00" height="367.00" fill="#f0f0f0" />
<rect x="258.00" y="85.00" width="944.00" height="367.00" fill="#000000" />
<rect x="258.00" y="85.00" width="2.40" height="367.00" fill="#565656" />
<rect x="258.00" y="85.00" width="944.00" height="1.80" fill="#565656" />
<path d="M278.80 87V320M278.80 323V439M298.16 87V320M298.16 323V439M317.52 87V320M317.52 323V439M336.88 87V320M336.88 323V439M356.24 87V320M356.24 323V439M375.60 87V320M375.60 323V439M394.96 87V320M394.96 323V439M414.32 87V320M414.32 323V439M433.68 87V320M433.68 323V439M453.04 87V320M453.04 323V439M472.40 87V320M472.40 323V439M491.76 87V320M491.76 323V439M511.12 87V320M511.12 323V439M530.48 87V320M530.48 323V439M549.84 87V320M549.84 323V439M569.20 87V320M569.20 323V439M588.56 87V320M588.56 323V439M607.92 87V320M607.92 323V439M627.28 87V320M627.28 323V439M646.64 87V320M646.64 323V439M666.00 87V320M666.00 323V439M685.36 87V320M685.36 323V439M704.72 87V320M704.72 323V439M724.08 87V320M724.08 323V439M743.44 87V320M743.44 323V439M762.80 87V320M762.80 323V439M782.16 87V320M782.16 323V439M801.52 87V320M801.52 323V439M820.88 87V320M820.88 323V439M840.24 87V320M840.24 323V439M859.60 87V320M859.60 323V439M878.96 87V320M878.96 323V439M898.32 87V320M898.32 323V439M917.68 87V320M917.68 323V439M937.04 87V320M937.04 323V439M956.40 87V320M956.40 323V439M975.76 87V320M975.76 323V439M995.12 87V320M995.12 323V439M1014.48 87V320M1014.48 323V439M1033.84 87V320M1033.84 323V439M1053.20 87V320M1053.20 323V439M1072.56 87V320M1072.56 323V439M1091.92 87V320M1091.92 323V439M1111.28 87V320M1111.28 323V439M1130.64 87V320M1130.64 323V439M1150.00 87V320M1150.00 323V439" stroke="#717d8a" stroke-width="0.9" stroke-dasharray="1.5 2.1" fill="none"/>
<path d="M260.5 88.65H1168.0M260.5 108.00H1168.0M260.5 127.35H1168.0M260.5 146.70H1168.0M260.5 166.05H1168.0M260.5 185.40H1168.0M260.5 204.75H1168.0M260.5 224.10H1168.0M260.5 243.45H1168.0M260.5 262.80H1168.0M260.5 282.15H1168.0M260.5 301.50H1168.0" stroke="#717d8a" stroke-width="0.9" stroke-dasharray="1.5 2.1" fill="none"/>
<defs><filter id="lblur" x="-5%" y="-5%" width="110%" height="110%"><feGaussianBlur stdDeviation="0.8"/></filter></defs>
<path d="M512.6 252 L648 116 L787 253 L770 270 L734 234 L734 372 L706 398 L706 305 L663.8 305 L663.8 438 Q663.8 452 649 452 Q634.5 452 634.5 438 L634.5 305 L590.7 305 L590.7 398 L562.5 372 L562.5 236 L529.5 269 Z M648 149 L590.7 206.5 L590.7 276.5 L634.5 276.5 L634.5 162.5 Z M648 149 L663.8 165 L663.8 276.5 L706 276.5 L706 206.5 Z" fill="rgba(190,190,190,0.14)" fill-rule="evenodd" filter="url(#lblur)"/>
<line x1="1168.00" y1="86.80" x2="1168.00" y2="439.00" stroke="#bdbdbd" stroke-width="1.10" />
<line x1="1168.00" y1="88.70" x2="1170.50" y2="88.70" stroke="#bdbdbd" stroke-width="0.80" />
<text transform="translate(1171.40 90.90) scale(0.880 1)" font-size="6.30" fill="#d8d8d8" text-anchor="start" stroke="#d8d8d8" stroke-width="0.15" >3394.470</text>
<line x1="1168.00" y1="108.05" x2="1170.50" y2="108.05" stroke="#bdbdbd" stroke-width="0.80" />
<text transform="translate(1171.40 110.25) scale(0.880 1)" font-size="6.30" fill="#d8d8d8" text-anchor="start" stroke="#d8d8d8" stroke-width="0.15" >3386.790</text>
<line x1="1168.00" y1="127.40" x2="1170.50" y2="127.40" stroke="#bdbdbd" stroke-width="0.80" />
<text transform="translate(1171.40 129.60) scale(0.880 1)" font-size="6.30" fill="#d8d8d8" text-anchor="start" stroke="#d8d8d8" stroke-width="0.15" >3379.110</text>
<line x1="1168.00" y1="146.75" x2="1170.50" y2="146.75" stroke="#bdbdbd" stroke-width="0.80" />
<text transform="translate(1171.40 148.95) scale(0.880 1)" font-size="6.30" fill="#d8d8d8" text-anchor="start" stroke="#d8d8d8" stroke-width="0.15" >3371.430</text>
<line x1="1168.00" y1="166.10" x2="1170.50" y2="166.10" stroke="#bdbdbd" stroke-width="0.80" />
<text transform="translate(1171.40 168.30) scale(0.880 1)" font-size="6.30" fill="#d8d8d8" text-anchor="start" stroke="#d8d8d8" stroke-width="0.15" >3363.750</text>
<line x1="1168.00" y1="185.45" x2="1170.50" y2="185.45" stroke="#bdbdbd" stroke-width="0.80" />
<text transform="translate(1171.40 187.65) scale(0.880 1)" font-size="6.30" fill="#d8d8d8" text-anchor="start" stroke="#d8d8d8" stroke-width="0.15" >3356.070</text>
<line x1="1168.00" y1="204.80" x2="1170.50" y2="204.80" stroke="#bdbdbd" stroke-width="0.80" />
<text transform="translate(1171.40 207.00) scale(0.880 1)" font-size="6.30" fill="#d8d8d8" text-anchor="start" stroke="#d8d8d8" stroke-width="0.15" >3348.390</text>
<line x1="1168.00" y1="224.15" x2="1170.50" y2="224.15" stroke="#bdbdbd" stroke-width="0.80" />
<text transform="translate(1171.40 226.35) scale(0.880 1)" font-size="6.30" fill="#d8d8d8" text-anchor="start" stroke="#d8d8d8" stroke-width="0.15" >3340.710</text>
<line x1="1168.00" y1="243.50" x2="1170.50" y2="243.50" stroke="#bdbdbd" stroke-width="0.80" />
<text transform="translate(1171.40 245.70) scale(0.880 1)" font-size="6.30" fill="#d8d8d8" text-anchor="start" stroke="#d8d8d8" stroke-width="0.15" >3333.030</text>
<line x1="1168.00" y1="262.85" x2="1170.50" y2="262.85" stroke="#bdbdbd" stroke-width="0.80" />
<text transform="translate(1171.40 265.05) scale(0.880 1)" font-size="6.30" fill="#d8d8d8" text-anchor="start" stroke="#d8d8d8" stroke-width="0.15" >3325.350</text>
<line x1="1168.00" y1="282.20" x2="1170.50" y2="282.20" stroke="#bdbdbd" stroke-width="0.80" />
<text transform="translate(1171.40 284.40) scale(0.880 1)" font-size="6.30" fill="#d8d8d8" text-anchor="start" stroke="#d8d8d8" stroke-width="0.15" >3317.670</text>
<line x1="1168.00" y1="301.55" x2="1170.50" y2="301.55" stroke="#bdbdbd" stroke-width="0.80" />
<text transform="translate(1171.40 303.75) scale(0.880 1)" font-size="6.30" fill="#d8d8d8" text-anchor="start" stroke="#d8d8d8" stroke-width="0.15" >3309.990</text>
<rect x="260.40" y="320.20" width="908.10" height="2.40" fill="#a8a8a8" />
<path d="M259.60 288.00V293.50M269.27 287.50V293.00M278.94 277.50V293.00M288.61 275.80V284.50M298.28 267.30V283.80M307.96 261.40V269.60M317.63 251.50V268.00M327.30 231.40V256.20M336.97 212.00V236.00M346.64 211.80V226.00M356.31 192.50V218.40M365.98 177.80V198.40M375.65 177.10V192.50M385.32 183.00V198.80M394.99 184.20V199.60M404.67 187.00V198.80M414.34 188.00V200.50M424.01 185.80V195.30M433.68 195.00V207.50M443.35 197.00V210.00M453.02 206.30V214.70M462.69 203.30V210.80M472.36 201.30V211.60M482.03 198.00V210.80M491.70 199.20V213.00M501.38 196.30V214.70M511.05 200.00V210.80M520.72 191.30V203.30M530.39 174.20V192.50M540.06 179.20V192.50M549.73 174.20V190.80M559.40 171.70V183.00M569.07 165.80V174.20M578.74 170.80V189.00M588.41 181.30V193.30M598.09 181.30V195.30M607.76 156.70V200.00M617.43 134.20V162.50M627.10 133.30V156.70M636.77 129.20V145.30M646.44 129.20V145.00M656.11 125.80V136.70M665.78 127.00V141.70M675.45 128.70V150.80M685.12 138.00V147.00M694.80 135.00V144.20M704.47 125.80V147.00M714.14 140.60V149.30M723.81 137.20V149.00M733.48 142.80V151.80M743.15 135.10V146.20M752.82 137.90V147.00M762.49 136.50V144.90M772.16 134.70V141.70M781.83 138.90V146.20M791.50 141.40V148.30M801.18 130.00V146.20M810.85 124.00V132.40M820.52 123.30V130.60M830.19 124.50V127.80M839.86 123.30V128.90M849.53 118.50V124.70M859.20 120.30V128.90M868.87 119.70V125.60M878.54 121.80V127.40M888.22 117.20V123.60M897.89 107.50V117.60M907.56 95.40V110.70M917.23 97.50V102.80M926.90 99.00V102.80M936.57 98.60V103.80M946.24 94.00V111.40M955.91 105.80V117.00M965.58 104.40V112.80M975.25 104.40V124.60M984.92 120.40V135.70M994.60 121.40V141.25M1004.27 127.40V136.40M1013.94 134.20V157.10M1023.61 152.00V167.40M1033.28 141.00V159.70M1042.95 136.10V149.30M1052.62 136.10V145.80M1062.29 129.20V145.80M1071.96 143.30V163.90M1081.63 136.10V157.00M1091.31 150.70V163.90M1100.98 152.50V163.60M1110.65 156.25V175.70M1120.32 166.00V173.30M1129.99 162.20V173.60M1139.66 161.80V172.90M1149.33 167.80V178.50M1159.00 165.30V172.20" stroke="#1fbf1f" stroke-width="1.2" fill="none"/>
<rect x="260.50" y="289.20" width="2.10" height="2.80" fill="#000000" stroke="#1fbf1f" stroke-width="1.25"/>
<rect x="266.27" y="289.20" width="6.00" height="2.80" fill="#ffffff" stroke="#1fbf1f" stroke-width="1.25"/>
<rect x="275.94" y="278.60" width="6.00" height="13.70" fill="#000000" stroke="#1fbf1f" stroke-width="1.25"/>
<rect x="285.61" y="278.60" width="6.00" height="2.40" fill="#ffffff" stroke="#1fbf1f" stroke-width="1.25"/>
<rect x="295.28" y="269.60" width="6.00" height="11.80" fill="#000000" stroke="#1fbf1f" stroke-width="1.25"/>
<rect x="304.96" y="266.30" width="6.00" height="3.30" fill="#000000" stroke="#1fbf1f" stroke-width="1.25"/>
<rect x="314.63" y="255.50" width="6.00" height="11.80" fill="#000000" stroke="#1fbf1f" stroke-width="1.25"/>
<rect x="324.30" y="231.40" width="6.00" height="24.80" fill="#000000" stroke="#1fbf1f" stroke-width="1.25"/>
<rect x="333.97" y="212.00" width="6.00" height="20.60" fill="#000000" stroke="#1fbf1f" stroke-width="1.25"/>
<rect x="343.64" y="212.50" width="6.00" height="2.40" fill="#ffffff" stroke="#1fbf1f" stroke-width="1.25"/>
<rect x="353.31" y="196.70" width="6.00" height="17.70" fill="#000000" stroke="#1fbf1f" stroke-width="1.25"/>
<rect x="362.98" y="191.30" width="6.00" height="6.60" fill="#000000" stroke="#1fbf1f" stroke-width="1.25"/>
<rect x="372.65" y="188.20" width="6.00" height="4.30" fill="#000000" stroke="#1fbf1f" stroke-width="1.25"/>
<rect x="382.32" y="189.40" width="6.00" height="4.70" fill="#ffffff" stroke="#1fbf1f" stroke-width="1.25"/>
<rect x="391.99" y="190.60" width="6.00" height="3.80" fill="#000000" stroke="#1fbf1f" stroke-width="1.25"/>
<rect x="401.67" y="190.80" width="6.00" height="2.90" fill="#ffffff" stroke="#1fbf1f" stroke-width="1.25"/>
<rect x="411.34" y="190.80" width="6.00" height="2.70" fill="#000000" stroke="#1fbf1f" stroke-width="1.25"/>
<rect x="421.01" y="191.30" width="6.00" height="4.00" fill="#ffffff" stroke="#1fbf1f" stroke-width="1.25"/>
<rect x="430.68" y="195.00" width="6.00" height="9.20" fill="#ffffff" stroke="#1fbf1f" stroke-width="1.25"/>
<rect x="440.35" y="204.20" width="6.00" height="4.10" fill="#ffffff" stroke="#1fbf1f" stroke-width="1.25"/>
<rect x="450.02" y="207.80" width="6.00" height="1.90" fill="#ffffff" stroke="#1fbf1f" stroke-width="1.25"/>
<rect x="459.69" y="204.50" width="6.00" height="5.20" fill="#000000" stroke="#1fbf1f" stroke-width="1.25"/>
<rect x="469.36" y="204.70" width="6.00" height="5.60" fill="#ffffff" stroke="#1fbf1f" stroke-width="1.25"/>
<rect x="479.03" y="202.20" width="6.00" height="8.10" fill="#000000" stroke="#1fbf1f" stroke-width="1.25"/>
<rect x="488.70" y="202.00" width="6.00" height="10.50" fill="#ffffff" stroke="#1fbf1f" stroke-width="1.25"/>
<rect x="498.38" y="203.70" width="6.00" height="9.60" fill="#000000" stroke="#1fbf1f" stroke-width="1.25"/>
<rect x="508.05" y="202.00" width="6.00" height="2.70" fill="#000000" stroke="#1fbf1f" stroke-width="1.25"/>
<rect x="517.72" y="191.30" width="6.00" height="11.20" fill="#000000" stroke="#1fbf1f" stroke-width="1.25"/>
<rect x="527.39" y="183.00" width="6.00" height="9.50" fill="#000000" stroke="#1fbf1f" stroke-width="1.25"/>
<rect x="537.06" y="183.30" width="6.00" height="2.00" fill="#ffffff" stroke="#1fbf1f" stroke-width="1.25"/>
<rect x="546.73" y="180.80" width="6.00" height="4.50" fill="#000000" stroke="#1fbf1f" stroke-width="1.25"/>
<rect x="556.40" y="172.50" width="6.00" height="9.50" fill="#000000" stroke="#1fbf1f" stroke-width="1.25"/>
<rect x="566.07" y="170.50" width="6.00" height="3.70" fill="#000000" stroke="#1fbf1f" stroke-width="1.25"/>
<rect x="575.74" y="170.80" width="6.00" height="15.90" fill="#ffffff" stroke="#1fbf1f" stroke-width="1.25"/>
<rect x="585.41" y="184.20" width="6.00" height="2.80" fill="#000000" stroke="#1fbf1f" stroke-width="1.25"/>
<rect x="595.09" y="184.20" width="6.00" height="2.10" fill="#ffffff" stroke="#1fbf1f" stroke-width="1.25"/>
<rect x="604.76" y="158.30" width="6.00" height="28.40" fill="#000000" stroke="#1fbf1f" stroke-width="1.25"/>
<rect x="614.43" y="147.20" width="6.00" height="12.00" fill="#000000" stroke="#1fbf1f" stroke-width="1.25"/>
<rect x="624.10" y="138.30" width="6.00" height="10.00" fill="#000000" stroke="#1fbf1f" stroke-width="1.25"/>
<rect x="633.77" y="138.80" width="6.00" height="4.20" fill="#ffffff" stroke="#1fbf1f" stroke-width="1.25"/>
<rect x="643.44" y="130.30" width="6.00" height="12.20" fill="#000000" stroke="#1fbf1f" stroke-width="1.25"/>
<rect x="653.11" y="130.00" width="6.00" height="5.50" fill="#ffffff" stroke="#1fbf1f" stroke-width="1.25"/>
<rect x="662.78" y="135.30" width="6.00" height="3.40" fill="#ffffff" stroke="#1fbf1f" stroke-width="1.25"/>
<rect x="672.45" y="138.30" width="6.00" height="3.70" fill="#ffffff" stroke="#1fbf1f" stroke-width="1.25"/>
<rect x="682.12" y="138.00" width="6.00" height="4.50" fill="#000000" stroke="#1fbf1f" stroke-width="1.25"/>
<rect x="691.80" y="138.00" width="6.00" height="2.00" fill="#ffffff" stroke="#1fbf1f" stroke-width="1.25"/>
<rect x="701.47" y="139.50" width="6.00" height="4.70" fill="#ffffff" stroke="#1fbf1f" stroke-width="1.25"/>
<rect x="711.14" y="141.80" width="6.00" height="2.60" fill="#000000" stroke="#1fbf1f" stroke-width="1.25"/>
<rect x="720.81" y="142.50" width="6.00" height="5.80" fill="#ffffff" stroke="#1fbf1f" stroke-width="1.25"/>
<rect x="730.48" y="145.60" width="6.00" height="4.10" fill="#000000" stroke="#1fbf1f" stroke-width="1.25"/>
<rect x="740.15" y="137.50" width="6.00" height="8.70" fill="#000000" stroke="#1fbf1f" stroke-width="1.25"/>
<rect x="749.82" y="137.90" width="6.00" height="6.30" fill="#ffffff" stroke="#1fbf1f" stroke-width="1.25"/>
<rect x="759.49" y="137.90" width="6.00" height="7.00" fill="#000000" stroke="#1fbf1f" stroke-width="1.25"/>
<rect x="769.16" y="138.30" width="6.00" height="2.00" fill="#ffffff" stroke="#1fbf1f" stroke-width="1.25"/>
<rect x="778.83" y="138.90" width="6.00" height="2.80" fill="#ffffff" stroke="#1fbf1f" stroke-width="1.25"/>
<rect x="788.50" y="141.40" width="6.00" height="3.50" fill="#ffffff" stroke="#1fbf1f" stroke-width="1.25"/>
<rect x="798.18" y="131.25" width="6.00" height="14.55" fill="#000000" stroke="#1fbf1f" stroke-width="1.25"/>
<rect x="807.85" y="126.40" width="6.00" height="5.60" fill="#000000" stroke="#1fbf1f" stroke-width="1.25"/>
<rect x="817.52" y="125.40" width="6.00" height="1.80" fill="#000000" stroke="#1fbf1f" stroke-width="1.25"/>
<rect x="827.19" y="126.10" width="6.00" height="1.70" fill="#ffffff" stroke="#1fbf1f" stroke-width="1.25"/>
<rect x="836.86" y="123.30" width="6.00" height="3.90" fill="#000000" stroke="#1fbf1f" stroke-width="1.25"/>
<rect x="846.53" y="121.25" width="6.00" height="3.15" fill="#000000" stroke="#1fbf1f" stroke-width="1.25"/>
<rect x="856.20" y="121.25" width="6.00" height="3.45" fill="#ffffff" stroke="#1fbf1f" stroke-width="1.25"/>
<rect x="865.87" y="124.20" width="6.00" height="1.60" fill="#ffffff" stroke="#1fbf1f" stroke-width="1.25"/>
<rect x="875.54" y="122.50" width="6.00" height="3.50" fill="#000000" stroke="#1fbf1f" stroke-width="1.25"/>
<rect x="885.22" y="120.40" width="6.00" height="3.20" fill="#000000" stroke="#1fbf1f" stroke-width="1.25"/>
<rect x="894.89" y="108.60" width="6.00" height="7.65" fill="#000000" stroke="#1fbf1f" stroke-width="1.25"/>
<rect x="904.56" y="99.60" width="6.00" height="10.40" fill="#000000" stroke="#1fbf1f" stroke-width="1.25"/>
<rect x="914.23" y="100.30" width="6.00" height="2.10" fill="#ffffff" stroke="#1fbf1f" stroke-width="1.25"/>
<rect x="923.90" y="99.60" width="6.00" height="2.80" fill="#000000" stroke="#1fbf1f" stroke-width="1.25"/>
<rect x="933.57" y="99.60" width="6.00" height="3.50" fill="#ffffff" stroke="#1fbf1f" stroke-width="1.25"/>
<rect x="943.24" y="102.40" width="6.00" height="9.00" fill="#ffffff" stroke="#1fbf1f" stroke-width="1.25"/>
<rect x="952.91" y="108.30" width="6.00" height="3.10" fill="#000000" stroke="#1fbf1f" stroke-width="1.25"/>
<rect x="962.58" y="105.80" width="6.00" height="2.80" fill="#000000" stroke="#1fbf1f" stroke-width="1.25"/>
<rect x="972.25" y="105.80" width="6.00" height="14.60" fill="#ffffff" stroke="#1fbf1f" stroke-width="1.25"/>
<rect x="981.92" y="120.40" width="6.00" height="5.60" fill="#ffffff" stroke="#1fbf1f" stroke-width="1.25"/>
<rect x="991.60" y="125.30" width="6.00" height="7.60" fill="#ffffff" stroke="#1fbf1f" stroke-width="1.25"/>
<rect x="1001.27" y="132.20" width="6.00" height="4.20" fill="#ffffff" stroke="#1fbf1f" stroke-width="1.25"/>
<rect x="1010.94" y="135.50" width="6.00" height="21.60" fill="#ffffff" stroke="#1fbf1f" stroke-width="1.25"/>
<rect x="1020.61" y="152.80" width="6.00" height="3.90" fill="#000000" stroke="#1fbf1f" stroke-width="1.25"/>
<rect x="1030.28" y="141.70" width="6.00" height="13.20" fill="#000000" stroke="#1fbf1f" stroke-width="1.25"/>
<rect x="1039.95" y="142.00" width="6.00" height="2.20" fill="#ffffff" stroke="#1fbf1f" stroke-width="1.25"/>
<rect x="1049.62" y="138.20" width="6.00" height="6.50" fill="#000000" stroke="#1fbf1f" stroke-width="1.25"/>
<rect x="1059.29" y="138.20" width="6.00" height="6.20" fill="#ffffff" stroke="#1fbf1f" stroke-width="1.25"/>
<rect x="1068.96" y="143.30" width="6.00" height="12.95" fill="#ffffff" stroke="#1fbf1f" stroke-width="1.25"/>
<rect x="1078.63" y="153.00" width="6.00" height="3.70" fill="#000000" stroke="#1fbf1f" stroke-width="1.25"/>
<rect x="1088.31" y="152.80" width="6.00" height="1.60" fill="#000000" stroke="#1fbf1f" stroke-width="1.25"/>
<rect x="1097.98" y="152.80" width="6.00" height="10.80" fill="#ffffff" stroke="#1fbf1f" stroke-width="1.25"/>
<rect x="1107.65" y="162.80" width="6.00" height="9.70" fill="#ffffff" stroke="#1fbf1f" stroke-width="1.25"/>
<rect x="1117.32" y="172.00" width="6.00" height="1.60" fill="#000000" stroke="#1fbf1f" stroke-width="1.25"/>
<rect x="1126.99" y="166.00" width="6.00" height="7.60" fill="#000000" stroke="#1fbf1f" stroke-width="1.25"/>
<rect x="1136.66" y="166.40" width="6.00" height="2.35" fill="#ffffff" stroke="#1fbf1f" stroke-width="1.25"/>
<rect x="1146.33" y="167.80" width="6.00" height="1.90" fill="#ffffff" stroke="#1fbf1f" stroke-width="1.25"/>
<rect x="1156.00" y="167.80" width="6.00" height="1.90" fill="#000000" stroke="#1fbf1f" stroke-width="1.25"/>
<path d="M269.27 319.8V314.40M278.94 319.8V314.40M288.61 319.8V315.10M298.28 319.8V314.40M307.96 319.8V313.70M317.63 319.8V312.20M327.30 319.8V309.80M336.97 319.8V307.90M346.64 319.8V310.80M356.31 319.8V307.90M365.98 319.8V306.50M375.65 319.8V310.40M385.32 319.8V310.80M394.99 319.8V311.50M404.67 319.8V313.70M414.34 319.8V313.30M424.01 319.8V315.10M433.68 319.8V313.70M443.35 319.8V314.40M453.02 319.8V311.50M462.69 319.8V314.40M472.36 319.8V314.40M482.03 319.8V314.40M491.70 319.8V313.30M501.38 319.8V313.30M511.05 319.8V312.20M520.72 319.8V314.40M530.39 319.8V311.50M540.06 319.8V313.30M549.73 319.8V311.50M559.40 319.8V311.50M569.07 319.8V310.80M578.74 319.8V310.10M588.41 319.8V307.90M598.09 319.8V310.10M607.76 319.8V303.60M617.43 319.8V302.50M627.10 319.8V297.10M636.77 319.8V302.90M646.44 319.8V302.90M656.11 319.8V308.60M665.78 319.8V307.90M675.45 319.8V310.10M685.12 319.8V310.80M694.80 319.8V313.70M704.47 319.8V311.50M714.14 319.8V314.40M723.81 319.8V314.00M733.48 319.8V314.40M743.15 319.8V315.10M752.82 319.8V313.30M762.49 319.8V315.10M772.16 319.8V315.80M781.83 319.8V314.80M791.50 319.8V315.10M801.18 319.8V315.10M810.85 319.8V315.10M820.52 319.8V315.10M830.19 319.8V316.90M839.86 319.8V315.80M849.53 319.8V315.10M859.20 319.8V318.00M868.87 319.8V316.90M878.54 319.8V318.00M888.22 319.8V315.10M897.89 319.8V313.70M907.56 319.8V315.10M917.23 319.8V317.60M926.90 319.8V316.90M936.57 319.8V315.10M946.24 319.8V314.40M955.91 319.8V315.80M965.58 319.8V314.00M975.25 319.8V312.20M984.92 319.8V311.50M994.60 319.8V311.50M1004.27 319.8V311.50M1013.94 319.8V297.10M1023.61 319.8V304.30M1033.28 319.8V307.20M1042.95 319.8V309.00M1052.62 319.8V310.40M1062.29 319.8V311.50M1071.96 319.8V308.60M1081.63 319.8V311.50M1091.31 319.8V310.40M1100.98 319.8V313.70M1110.65 319.8V311.50M1120.32 319.8V314.40M1129.99 319.8V314.40M1139.66 319.8V315.10M1149.33 319.8V314.40M1159.00 319.8V315.80" stroke="#2cc72c" stroke-width="1.9" fill="none"/>
<line x1="269.27" y1="285.20" x2="278.94" y2="279.50" stroke="#2f6fc0" stroke-width="0.9" stroke-dasharray="1.2 1.6"/>
<path d="M269.27 282.60l2.6 2.6l-2.6 2.6l-2.6-2.6z" fill="#2f7fe0" stroke="#dfe6f0" stroke-width="0.9" stroke-linejoin="round"/>
<path d="M278.94 270.90l2.4 2.4l-2.4 2.4l-2.4-2.4z" fill="#f5502e" stroke="#ecd8d2" stroke-width="1.0" stroke-linejoin="round"/>
<line x1="530.39" y1="179.20" x2="559.40" y2="172.00" stroke="#2f6fc0" stroke-width="0.9" stroke-dasharray="1.2 1.6"/>
<path d="M530.39 176.60l2.6 2.6l-2.6 2.6l-2.6-2.6z" fill="#2f7fe0" stroke="#dfe6f0" stroke-width="0.9" stroke-linejoin="round"/>
<path d="M559.40 163.40l2.4 2.4l-2.4 2.4l-2.4-2.4z" fill="#f5502e" stroke="#ecd8d2" stroke-width="1.0" stroke-linejoin="round"/>
<path d="M559.40 173.60l2.6 2.6l-2.6 2.6l-2.6-2.6z" fill="#2f7fe0" stroke="#dfe6f0" stroke-width="0.9" stroke-linejoin="round"/>
<line x1="607.76" y1="161.00" x2="607.76" y2="166.00" stroke="#2f6fc0" stroke-width="0.9" stroke-dasharray="1.2 1.6"/>
<path d="M607.76 152.40l2.4 2.4l-2.4 2.4l-2.4-2.4z" fill="#f5502e" stroke="#ecd8d2" stroke-width="1.0" stroke-linejoin="round"/>
<path d="M607.76 165.10l2.6 2.6l-2.6 2.6l-2.6-2.6z" fill="#2f7fe0" stroke="#dfe6f0" stroke-width="0.9" stroke-linejoin="round"/>
<line x1="636.77" y1="135.50" x2="656.11" y2="126.50" stroke="#2f6fc0" stroke-width="0.9" stroke-dasharray="1.2 1.6"/>
<path d="M636.77 132.90l2.6 2.6l-2.6 2.6l-2.6-2.6z" fill="#2f7fe0" stroke="#dfe6f0" stroke-width="0.9" stroke-linejoin="round"/>
<path d="M656.11 121.80l2.4 2.4l-2.4 2.4l-2.4-2.4z" fill="#f5502e" stroke="#ecd8d2" stroke-width="1.0" stroke-linejoin="round"/>
<line x1="810.85" y1="128.20" x2="849.53" y2="119.00" stroke="#2f6fc0" stroke-width="0.9" stroke-dasharray="1.2 1.6"/>
<path d="M810.85 125.60l2.6 2.6l-2.6 2.6l-2.6-2.6z" fill="#2f7fe0" stroke="#dfe6f0" stroke-width="0.9" stroke-linejoin="round"/>
<path d="M849.53 114.30l2.4 2.4l-2.4 2.4l-2.4-2.4z" fill="#f5502e" stroke="#ecd8d2" stroke-width="1.0" stroke-linejoin="round"/>
<path d="M1110.65 162.90l2.4 2.4l-2.4 2.4l-2.4-2.4z" fill="#f5502e" stroke="#ecd8d2" stroke-width="1.0" stroke-linejoin="round"/>
<path d="M1110.65 175.90l2.6 2.6l-2.6 2.6l-2.6-2.6z" fill="#2f7fe0" stroke="#dfe6f0" stroke-width="0.9" stroke-linejoin="round"/>
<rect x="262.6" y="90.8" width="8.6" height="5.6" fill="#e84a4a"/>
<path d="M262.6 93.6h8.6M266.9 90.8v5.6" stroke="#ffffff" stroke-width="0.7"/>
<rect x="266.9" y="90.8" width="4.3" height="5.6" fill="#3b8fe6"/>
<path d="M262.6 93.6h8.6M266.9 90.8v5.6" stroke="#ffffff" stroke-width="0.7"/>
<rect x="275.2" y="90.6" width="4.3" height="6" fill="#e84a4a"/><rect x="279.5" y="90.6" width="4.3" height="6" fill="#3b8fe6"/>
<path d="M276.4 96v-3M278 96v-4.6M281 96v-3.4M282.6 96v-4.4" stroke="#ffffff" stroke-width="0.7"/>
<text x="287" y="95.8" font-size="6.6" fill="#d2d2d2" textLength="201.7" lengthAdjust="spacingAndGlyphs" xml:space="preserve">XAUUSD, M15:  Gold vs US Dollar  4332.521 4334.195 4328.515 4329.337  1617</text>
<clipPath id="cp1"><rect x="260" y="96" width="907.0" height="14"/></clipPath>
<text x="263.8" y="106.3" font-size="6.6" fill="#cdcdcd" textLength="904" lengthAdjust="spacingAndGlyphs" clip-path="url(#cp1)">Euro AI EA@YoForexPremium [InitialLot=0.1; MartingaleMultiplier=2.0; MaxMartingaleSteps=4; MaxAllowedLot=5.0; ResetOnProfit=true; StopLossPips=100.0; TakeProfitPips=250.0; PendingBufferPips=5.0; UseTrailingSL=true; UseATRTrailing=true; ATR_TrailMultiplier=1.5; ATRTrailStartPips=40.0; ExtraBufferPips=20.0; UseStepTrailing=true; StepTrailStartPips</text>
<text x="1079" y="95.5" font-size="6.6" fill="#d0d0d0" textLength="74" lengthAdjust="spacingAndGlyphs">Euro AI EA@YoForexPremium</text>
<path d="M1156.8 92.6l4.6-2.4l4.6 2.4l-4.6 2.4z" fill="#e0e0e0"/><path d="M1158.8 93.8v2.2q2.6 1.4 5.2 0v-2.2" fill="#cfcfcf"/>
<text transform="translate(262.20 329.20) scale(0.850 1)" font-size="6.00" fill="#cfcfcf" text-anchor="start" stroke="#cfcfcf" stroke-width="0.28" >ATR(10) 7.100</text>
<polyline points="260.5,413.2 260.4,413.9 269.4,415.7 279.1,410.3 288.8,411.0 298.2,403.1 307.9,403.8 317.6,398.5 327.3,385.9 337.0,373.6 346.7,368.2 356.4,355.6 366.2,350.3 375.9,351.0 385.6,345.6 395.3,347.4 405.0,344.9 414.4,347.4 424.1,359.2 433.8,367.9 443.5,369.0 453.2,380.8 462.9,390.5 472.6,394.1 482.3,397.0 492.1,398.1 501.8,393.1 511.5,394.9 521.2,392.3 530.9,389.5 540.3,388.7 550.0,383.3 559.7,376.2 569.4,377.2 579.1,370.8 588.8,372.6 598.5,374.4 608.2,349.2 617.9,337.3 627.7,333.0 637.0,331.9 646.7,333.0 656.4,337.3 666.2,333.0 675.9,331.2 685.6,333.0 695.3,337.3 705.0,352.8 705.0,354.1 713.6,369.7 723.8,376.3 733.5,381.4 742.9,384.5 752.7,384.1 762.4,389.2 772.2,400.2 782.0,401.7 791.7,402.9 801.5,406.4 811.2,406.8 821.0,411.5 830.8,416.6 840.5,419.7 850.3,422.8 860.1,421.6 869.8,422.8 879.6,425.5 889.4,426.3 898.4,428.3 908.1,423.6 917.9,423.2 927.7,423.6 937.4,422.4 947.2,413.4 957.0,410.3 965.9,409.5 975.7,397.8 985.5,390.4 995.2,385.3 1005.0,388.4 1014.8,376.3 1024.5,367.0 1034.3,358.8 1044.1,362.7 1053.8,364.2 1063.6,357.2 1073.4,356.4 1082.3,354.1 1092.9,358.8 1102.7,358.8 1112.4,360.7 1122.2,365.8 1132.0,372.4 1141.7,374.4 1150.3,374.4 1158.1,381.4" fill="none" stroke="#1f8484" stroke-width="1.2" stroke-linejoin="round"/>
<text transform="translate(1171.40 326.00) scale(0.880 1)" font-size="6.30" fill="#d8d8d8" text-anchor="start" stroke="#d8d8d8" stroke-width="0.15" >8.248</text>
<text transform="translate(1171.40 437.60) scale(0.880 1)" font-size="6.30" fill="#d8d8d8" text-anchor="start" stroke="#d8d8d8" stroke-width="0.15" >2.197</text>
<line x1="1168.00" y1="323.20" x2="1170.50" y2="323.20" stroke="#bdbdbd" stroke-width="0.80" />
<line x1="1168.00" y1="436.00" x2="1170.50" y2="436.00" stroke="#bdbdbd" stroke-width="0.80" />
<line x1="260.40" y1="439.20" x2="1168.00" y2="439.20" stroke="#bdbdbd" stroke-width="1.10" />
<line x1="259.40" y1="439.20" x2="259.40" y2="441.40" stroke="#bdbdbd" stroke-width="0.80" />
<text x="259.40" y="447.2" font-size="6.6" fill="#e4e4e4" textLength="27.50" lengthAdjust="spacingAndGlyphs">2 Jun 2025</text>
<line x1="298.06" y1="439.20" x2="298.06" y2="441.40" stroke="#bdbdbd" stroke-width="0.80" />
<text x="298.06" y="447.2" font-size="6.6" fill="#e4e4e4" textLength="30.20" lengthAdjust="spacingAndGlyphs">2 Jun 05:30</text>
<line x1="336.72" y1="439.20" x2="336.72" y2="441.40" stroke="#bdbdbd" stroke-width="0.80" />
<text x="336.72" y="447.2" font-size="6.6" fill="#e4e4e4" textLength="30.20" lengthAdjust="spacingAndGlyphs">2 Jun 06:30</text>
<line x1="375.38" y1="439.20" x2="375.38" y2="441.40" stroke="#bdbdbd" stroke-width="0.80" />
<text x="375.38" y="447.2" font-size="6.6" fill="#e4e4e4" textLength="30.20" lengthAdjust="spacingAndGlyphs">2 Jun 07:30</text>
<line x1="414.04" y1="439.20" x2="414.04" y2="441.40" stroke="#bdbdbd" stroke-width="0.80" />
<text x="414.04" y="447.2" font-size="6.6" fill="#e4e4e4" textLength="30.20" lengthAdjust="spacingAndGlyphs">2 Jun 08:30</text>
<line x1="452.70" y1="439.20" x2="452.70" y2="441.40" stroke="#bdbdbd" stroke-width="0.80" />
<text x="452.70" y="447.2" font-size="6.6" fill="#e4e4e4" textLength="30.20" lengthAdjust="spacingAndGlyphs">2 Jun 09:30</text>
<line x1="491.36" y1="439.20" x2="491.36" y2="441.40" stroke="#bdbdbd" stroke-width="0.80" />
<text x="491.36" y="447.2" font-size="6.6" fill="#e4e4e4" textLength="30.20" lengthAdjust="spacingAndGlyphs">2 Jun 10:30</text>
<line x1="530.02" y1="439.20" x2="530.02" y2="441.40" stroke="#bdbdbd" stroke-width="0.80" />
<text x="530.02" y="447.2" font-size="6.6" fill="#e4e4e4" textLength="30.20" lengthAdjust="spacingAndGlyphs">2 Jun 11:30</text>
<line x1="568.68" y1="439.20" x2="568.68" y2="441.40" stroke="#bdbdbd" stroke-width="0.80" />
<text x="568.68" y="447.2" font-size="6.6" fill="#e4e4e4" textLength="30.20" lengthAdjust="spacingAndGlyphs">2 Jun 12:30</text>
<line x1="607.34" y1="439.20" x2="607.34" y2="441.40" stroke="#bdbdbd" stroke-width="0.80" />
<text x="607.34" y="447.2" font-size="6.6" fill="#e4e4e4" textLength="30.20" lengthAdjust="spacingAndGlyphs">2 Jun 13:30</text>
<line x1="646.00" y1="439.20" x2="646.00" y2="441.40" stroke="#bdbdbd" stroke-width="0.80" />
<text x="646.00" y="447.2" font-size="6.6" fill="#e4e4e4" textLength="30.20" lengthAdjust="spacingAndGlyphs">2 Jun 14:30</text>
<line x1="684.66" y1="439.20" x2="684.66" y2="441.40" stroke="#bdbdbd" stroke-width="0.80" />
<text x="684.66" y="447.2" font-size="6.6" fill="#e4e4e4" textLength="30.20" lengthAdjust="spacingAndGlyphs">2 Jun 15:30</text>
<line x1="723.32" y1="439.20" x2="723.32" y2="441.40" stroke="#bdbdbd" stroke-width="0.80" />
<text x="723.32" y="447.2" font-size="6.6" fill="#e4e4e4" textLength="30.20" lengthAdjust="spacingAndGlyphs">2 Jun 16:30</text>
<line x1="761.98" y1="439.20" x2="761.98" y2="441.40" stroke="#bdbdbd" stroke-width="0.80" />
<text x="761.98" y="447.2" font-size="6.6" fill="#e4e4e4" textLength="30.20" lengthAdjust="spacingAndGlyphs">2 Jun 17:30</text>
<line x1="800.64" y1="439.20" x2="800.64" y2="441.40" stroke="#bdbdbd" stroke-width="0.80" />
<text x="800.64" y="447.2" font-size="6.6" fill="#e4e4e4" textLength="30.20" lengthAdjust="spacingAndGlyphs">2 Jun 18:30</text>
<line x1="839.30" y1="439.20" x2="839.30" y2="441.40" stroke="#bdbdbd" stroke-width="0.80" />
<text x="839.30" y="447.2" font-size="6.6" fill="#e4e4e4" textLength="30.20" lengthAdjust="spacingAndGlyphs">2 Jun 19:30</text>
<line x1="877.96" y1="439.20" x2="877.96" y2="441.40" stroke="#bdbdbd" stroke-width="0.80" />
<text x="877.96" y="447.2" font-size="6.6" fill="#e4e4e4" textLength="30.20" lengthAdjust="spacingAndGlyphs">2 Jun 20:30</text>
<line x1="916.62" y1="439.20" x2="916.62" y2="441.40" stroke="#bdbdbd" stroke-width="0.80" />
<text x="916.62" y="447.2" font-size="6.6" fill="#e4e4e4" textLength="30.20" lengthAdjust="spacingAndGlyphs">2 Jun 22:30</text>
<line x1="955.28" y1="439.20" x2="955.28" y2="441.40" stroke="#bdbdbd" stroke-width="0.80" />
<text x="955.28" y="447.2" font-size="6.6" fill="#e4e4e4" textLength="30.20" lengthAdjust="spacingAndGlyphs">2 Jun 23:30</text>
<line x1="993.94" y1="439.20" x2="993.94" y2="441.40" stroke="#bdbdbd" stroke-width="0.80" />
<text x="993.94" y="447.2" font-size="6.6" fill="#e4e4e4" textLength="30.20" lengthAdjust="spacingAndGlyphs">3 Jun 00:30</text>
<line x1="1032.60" y1="439.20" x2="1032.60" y2="441.40" stroke="#bdbdbd" stroke-width="0.80" />
<text x="1032.60" y="447.2" font-size="6.6" fill="#e4e4e4" textLength="30.20" lengthAdjust="spacingAndGlyphs">3 Jun 01:30</text>
<line x1="1071.26" y1="439.20" x2="1071.26" y2="441.40" stroke="#bdbdbd" stroke-width="0.80" />
<text x="1071.26" y="447.2" font-size="6.6" fill="#e4e4e4" textLength="30.20" lengthAdjust="spacingAndGlyphs">3 Jun 02:30</text>
<line x1="1109.92" y1="439.20" x2="1109.92" y2="441.40" stroke="#bdbdbd" stroke-width="0.80" />
<text x="1109.92" y="447.2" font-size="6.6" fill="#e4e4e4" textLength="30.20" lengthAdjust="spacingAndGlyphs">3 Jun 03:30</text>
<line x1="1148.58" y1="439.20" x2="1148.58" y2="441.40" stroke="#bdbdbd" stroke-width="0.80" />
<text x="1148.58" y="447.2" font-size="6.6" fill="#e4e4e4" textLength="30.20" lengthAdjust="spacingAndGlyphs">3 Jun 04:30</text>
<rect x="256.00" y="452.00" width="946.00" height="11.00" fill="#f0f0f0" />
<line x1="258.60" y1="452.00" x2="258.60" y2="463.00" stroke="#c8c8c8" stroke-width="0.80" />
<text transform="translate(266.90 460.00) scale(0.840 1)" font-size="8.00" fill="#8f8f8f" text-anchor="start" stroke="#8f8f8f" stroke-width="0.28" >XAUUSD,H1</text>
<path d="M312.5 452V462.7H367.2V452" fill="#ffffff" stroke="#3a3a3a" stroke-width="0.9"/>
<text transform="translate(317.70 460.00) scale(0.820 1)" font-size="8.00" fill="#222222" text-anchor="start" stroke="#222222" stroke-width="0.28" >XAUUSD,M15</text>
<path d="M376.2 455.4h6.6l0.5 5.4h-7.6z" fill="#f2c200"/><path d="M377.9 455.4v-0.8a1.6 1.6 0 0 1 3.2 0v0.8" fill="none" stroke="#d8a800" stroke-width="0.8"/>
<text transform="translate(389.00 460.00) scale(0.860 1)" font-size="8.00" fill="#8f8f8f" text-anchor="start" stroke="#8f8f8f" stroke-width="0.28" >Market</text>
<line x1="419.00" y1="453.60" x2="419.00" y2="461.20" stroke="#9a9a9a" stroke-width="0.80" />
<path d="M427 458.2a2.2 2.2 0 0 1 1.6-3a2.8 2.8 0 0 1 5.2 0.6a1.7 1.7 0 0 1 0.6 2.4z" fill="#bfe0ff" stroke="#4b95d6" stroke-width="0.8"/>
<path d="M431.2 458.2v2M426.6 460.4h8.8" stroke="#4b95d6" stroke-width="0.8"/>
<text transform="translate(438.60 460.00) scale(0.860 1)" font-size="8.00" fill="#8f8f8f" text-anchor="start" stroke="#8f8f8f" stroke-width="0.28" >VPS</text>
<path d="M1183 454.8l-1.6 1.8l1.6 1.8M1193.6 454.8l1.6 1.8l-1.6 1.8" fill="none" stroke="#b0b0b0" stroke-width="0.8"/>
<defs><radialGradient id="wmblob"><stop offset="0" stop-color="#000" stop-opacity="0.08"/><stop offset="1" stop-color="#000" stop-opacity="0"/></radialGradient></defs>
<ellipse cx="660" cy="456" rx="26" ry="11" fill="url(#wmblob)"/>
<rect x="42.00" y="463.00" width="1160.00" height="7.00" fill="#f0f0f0" />
<line x1="42.00" y1="466.20" x2="1202.00" y2="466.20" stroke="#d0d0d0" stroke-width="0.80" />
<line x1="256.00" y1="463.20" x2="1202.00" y2="463.20" stroke="#e4e4e4" stroke-width="0.60" />
<rect x="42.50" y="466.60" width="9.40" height="169.40" fill="#9ab4d2" />
<path d="M44.8 471.1L49.4 475.7M49.4 471.1L44.8 475.7" stroke="#151515" stroke-width="1.20"/>
<clipPath id="cpst"><rect x="42" y="590" width="10" height="46"/></clipPath>
<g clip-path="url(#cpst)"><text transform="translate(49.6 648) rotate(-90) scale(0.88 1)" font-size="7.8" fill="#1a1a1a" stroke="#1a1a1a" stroke-width="0.25">Strategy Tester</text></g>
<rect x="51.90" y="466.60" width="1150.10" height="169.40" fill="#ffffff" />
<rect x="51.90" y="466.60" width="9.40" height="0.00" fill="#ffffff" />
<path d="M75.80 470.6V593.6M75.80 597.0V624.9M95.15 470.6V593.6M95.15 597.0V624.9M114.50 470.6V593.6M114.50 597.0V624.9M133.85 470.6V593.6M133.85 597.0V624.9M153.20 470.6V593.6M153.20 597.0V624.9M172.55 470.6V593.6M172.55 597.0V624.9M191.90 470.6V593.6M191.90 597.0V624.9M211.25 470.6V593.6M211.25 597.0V624.9M230.60 470.6V593.6M230.60 597.0V624.9M249.95 470.6V593.6M249.95 597.0V624.9M269.30 470.6V593.6M269.30 597.0V624.9M288.65 470.6V593.6M288.65 597.0V624.9M308.00 470.6V593.6M308.00 597.0V624.9M327.35 470.6V593.6M327.35 597.0V624.9M346.70 470.6V593.6M346.70 597.0V624.9M366.05 470.6V593.6M366.05 597.0V624.9M385.40 470.6V593.6M385.40 597.0V624.9M404.75 470.6V593.6M404.75 597.0V624.9M424.10 470.6V593.6M424.10 597.0V624.9M443.45 470.6V593.6M443.45 597.0V624.9M462.80 470.6V593.6M462.80 597.0V624.9M482.15 470.6V593.6M482.15 597.0V624.9M501.50 470.6V593.6M501.50 597.0V624.9M520.85 470.6V593.6M520.85 597.0V624.9M540.20 470.6V593.6M540.20 597.0V624.9M559.55 470.6V593.6M559.55 597.0V624.9M578.90 470.6V593.6M578.90 597.0V624.9M598.25 470.6V593.6M598.25 597.0V624.9M617.60 470.6V593.6M617.60 597.0V624.9M636.95 470.6V593.6M636.95 597.0V624.9M656.30 470.6V593.6M656.30 597.0V624.9M675.65 470.6V593.6M675.65 597.0V624.9M695.00 470.6V593.6M695.00 597.0V624.9M714.35 470.6V593.6M714.35 597.0V624.9M733.70 470.6V593.6M733.70 597.0V624.9M753.05 470.6V593.6M753.05 597.0V624.9M772.40 470.6V593.6M772.40 597.0V624.9M791.75 470.6V593.6M791.75 597.0V624.9M811.10 470.6V593.6M811.10 597.0V624.9M830.45 470.6V593.6M830.45 597.0V624.9M849.80 470.6V593.6M849.80 597.0V624.9M869.15 470.6V593.6M869.15 597.0V624.9M888.50 470.6V593.6M888.50 597.0V624.9M907.85 470.6V593.6M907.85 597.0V624.9M927.20 470.6V593.6M927.20 597.0V624.9M946.55 470.6V593.6M946.55 597.0V624.9M965.90 470.6V593.6M965.90 597.0V624.9M985.25 470.6V593.6M985.25 597.0V624.9M1004.60 470.6V593.6M1004.60 597.0V624.9M1023.95 470.6V593.6M1023.95 597.0V624.9M1043.30 470.6V593.6M1043.30 597.0V624.9M1062.65 470.6V593.6M1062.65 597.0V624.9M1082.00 470.6V593.6M1082.00 597.0V624.9M1101.35 470.6V593.6M1101.35 597.0V624.9M1120.70 470.6V593.6M1120.70 597.0V624.9M1140.05 470.6V593.6M1140.05 597.0V624.9M1159.40 470.6V593.6M1159.40 597.0V624.9" stroke="#c4c4c4" stroke-width="0.8" stroke-dasharray="1.6 2" fill="none"/>
<path d="M57.0 478.30H1175.0M57.0 497.60H1175.0M57.0 516.90H1175.0M57.0 536.20H1175.0M57.0 555.50H1175.0M57.0 574.80H1175.0" stroke="#c4c4c4" stroke-width="0.8" stroke-dasharray="1.6 2" fill="none"/>
<rect x="56.0" y="469.6" width="1120.0" height="125.0" fill="none" stroke="#4a4a4a" stroke-width="1.3"/>
<path d="M56.0 594.6V625.4H1176.0V594.6" fill="none" stroke="#4a4a4a" stroke-width="1.1"/>
<line x1="56.00" y1="595.00" x2="1176.00" y2="595.00" stroke="#6a6a6a" stroke-width="1.60" />
<defs><filter id="wblur" x="-5%" y="-20%" width="110%" height="140%"><feGaussianBlur stdDeviation="1.4"/></filter></defs>
<g opacity="0.042" filter="url(#wblur)"><text x="651" y="531.5" font-size="68" font-weight="bold" fill="#000" stroke="#000" stroke-width="3.2" stroke-linejoin="round" text-anchor="middle" textLength="352" lengthAdjust="spacingAndGlyphs">YOFOREX</text></g>
<text transform="translate(58.1 476.6) scale(0.84 1)" font-size="6.6"><tspan fill="#2a2ad0">Balance</tspan><tspan fill="#888"> / </tspan><tspan fill="#22bb22">Equity</tspan></text>
<text transform="translate(58.20 602.60) scale(0.860 1)" font-size="6.60" fill="#222222" text-anchor="start" stroke="#222222" stroke-width="0.10" >Deposit Load</text>
<line x1="1176.00" y1="478.30" x2="1178.40" y2="478.30" stroke="#4a4a4a" stroke-width="0.80" />
<text transform="translate(1179.30 480.60) scale(0.800 1)" font-size="6.40" fill="#222222" text-anchor="start" stroke="#222222" stroke-width="0.12" >97644</text>
<line x1="1176.00" y1="497.63" x2="1178.40" y2="497.63" stroke="#4a4a4a" stroke-width="0.80" />
<text transform="translate(1179.30 499.93) scale(0.800 1)" font-size="6.40" fill="#222222" text-anchor="start" stroke="#222222" stroke-width="0.12" >80590</text>
<line x1="1176.00" y1="516.96" x2="1178.40" y2="516.96" stroke="#4a4a4a" stroke-width="0.80" />
<text transform="translate(1179.30 519.26) scale(0.800 1)" font-size="6.40" fill="#222222" text-anchor="start" stroke="#222222" stroke-width="0.12" >63537</text>
<line x1="1176.00" y1="536.29" x2="1178.40" y2="536.29" stroke="#4a4a4a" stroke-width="0.80" />
<text transform="translate(1179.30 538.59) scale(0.800 1)" font-size="6.40" fill="#222222" text-anchor="start" stroke="#222222" stroke-width="0.12" >46483</text>
<line x1="1176.00" y1="555.62" x2="1178.40" y2="555.62" stroke="#4a4a4a" stroke-width="0.80" />
<text transform="translate(1179.30 557.92) scale(0.800 1)" font-size="6.40" fill="#222222" text-anchor="start" stroke="#222222" stroke-width="0.12" >29430</text>
<line x1="1176.00" y1="574.95" x2="1178.40" y2="574.95" stroke="#4a4a4a" stroke-width="0.80" />
<text transform="translate(1179.30 577.25) scale(0.800 1)" font-size="6.40" fill="#222222" text-anchor="start" stroke="#222222" stroke-width="0.12" >12376</text>
<line x1="1176.00" y1="594.28" x2="1178.40" y2="594.28" stroke="#4a4a4a" stroke-width="0.80" />
<text transform="translate(1179.30 596.58) scale(0.800 1)" font-size="6.40" fill="#222222" text-anchor="start" stroke="#222222" stroke-width="0.12" >-4677</text>
<text transform="translate(1179.30 601.20) scale(0.800 1)" font-size="6.40" fill="#222222" text-anchor="start" stroke="#222222" stroke-width="0.12" >1.0%</text>
<text transform="translate(1179.30 628.60) scale(0.800 1)" font-size="6.40" fill="#222222" text-anchor="start" stroke="#222222" stroke-width="0.12" >0.0%</text>
<text x="56.90" y="631.9" font-size="6.4" fill="#222222" textLength="28.4" lengthAdjust="spacingAndGlyphs">2025.06.02</text>
<text x="95.60" y="631.9" font-size="6.4" fill="#222222" textLength="28.4" lengthAdjust="spacingAndGlyphs">2025.06.09</text>
<text x="134.30" y="631.9" font-size="6.4" fill="#222222" textLength="28.4" lengthAdjust="spacingAndGlyphs">2025.06.16</text>
<text x="173.00" y="631.9" font-size="6.4" fill="#222222" textLength="28.4" lengthAdjust="spacingAndGlyphs">2025.06.24</text>
<text x="211.70" y="631.9" font-size="6.4" fill="#222222" textLength="28.4" lengthAdjust="spacingAndGlyphs">2025.07.03</text>
<text x="250.40" y="631.9" font-size="6.4" fill="#222222" textLength="28.4" lengthAdjust="spacingAndGlyphs">2025.07.13</text>
<text x="289.10" y="631.9" font-size="6.4" fill="#222222" textLength="28.4" lengthAdjust="spacingAndGlyphs">2025.07.22</text>
<text x="327.80" y="631.9" font-size="6.4" fill="#222222" textLength="28.4" lengthAdjust="spacingAndGlyphs">2025.08.01</text>
<text x="366.50" y="631.9" font-size="6.4" fill="#222222" textLength="28.4" lengthAdjust="spacingAndGlyphs">2025.08.12</text>
<text x="405.20" y="631.9" font-size="6.4" fill="#222222" textLength="28.4" lengthAdjust="spacingAndGlyphs">2025.08.28</text>
<text x="443.90" y="631.9" font-size="6.4" fill="#222222" textLength="28.4" lengthAdjust="spacingAndGlyphs">2025.09.08</text>
<text x="482.60" y="631.9" font-size="6.4" fill="#222222" textLength="28.4" lengthAdjust="spacingAndGlyphs">2025.09.16</text>
<text x="521.30" y="631.9" font-size="6.4" fill="#222222" textLength="28.4" lengthAdjust="spacingAndGlyphs">2025.09.24</text>
<text x="560.00" y="631.9" font-size="6.4" fill="#222222" textLength="28.4" lengthAdjust="spacingAndGlyphs">2025.10.01</text>
<text x="598.70" y="631.9" font-size="6.4" fill="#222222" textLength="28.4" lengthAdjust="spacingAndGlyphs">2025.10.07</text>
<text x="637.40" y="631.9" font-size="6.4" fill="#222222" textLength="28.4" lengthAdjust="spacingAndGlyphs">2025.10.12</text>
<text x="676.10" y="631.9" font-size="6.4" fill="#222222" textLength="28.4" lengthAdjust="spacingAndGlyphs">2025.10.15</text>
<text x="714.80" y="631.9" font-size="6.4" fill="#222222" textLength="28.4" lengthAdjust="spacingAndGlyphs">2025.10.17</text>
<text x="753.50" y="631.9" font-size="6.4" fill="#222222" textLength="28.4" lengthAdjust="spacingAndGlyphs">2025.10.21</text>
<text x="792.20" y="631.9" font-size="6.4" fill="#222222" textLength="28.4" lengthAdjust="spacingAndGlyphs">2025.10.22</text>
<text x="830.90" y="631.9" font-size="6.4" fill="#222222" textLength="28.4" lengthAdjust="spacingAndGlyphs">2025.10.24</text>
<text x="869.60" y="631.9" font-size="6.4" fill="#222222" textLength="28.4" lengthAdjust="spacingAndGlyphs">2025.10.29</text>
<text x="908.30" y="631.9" font-size="6.4" fill="#222222" textLength="28.4" lengthAdjust="spacingAndGlyphs">2025.10.31</text>
<text x="947.00" y="631.9" font-size="6.4" fill="#222222" textLength="28.4" lengthAdjust="spacingAndGlyphs">2025.11.06</text>
<text x="985.70" y="631.9" font-size="6.4" fill="#222222" textLength="28.4" lengthAdjust="spacingAndGlyphs">2025.11.12</text>
<text x="1024.40" y="631.9" font-size="6.4" fill="#222222" textLength="28.4" lengthAdjust="spacingAndGlyphs">2025.11.14</text>
<text x="1063.10" y="631.9" font-size="6.4" fill="#222222" textLength="28.4" lengthAdjust="spacingAndGlyphs">2025.11.19</text>
<text x="1101.80" y="631.9" font-size="6.4" fill="#222222" textLength="28.4" lengthAdjust="spacingAndGlyphs">2025.11.24</text>
<text x="1140.50" y="631.9" font-size="6.4" fill="#222222" textLength="28.4" lengthAdjust="spacingAndGlyphs">2025.12.03</text>
<polyline points="56.0,588.2 58.4,587.8 60.8,588.0 63.3,587.2 65.7,587.6 68.1,586.7 70.4,585.8 72.8,587.3 75.2,584.9 77.5,584.9 79.8,587.1 82.2,583.6 84.5,585.0 86.9,584.0 89.2,583.0 91.5,582.4 93.9,583.0 96.2,584.4 98.5,582.3 100.9,582.5 103.2,582.9 105.6,581.0 108.0,582.8 110.3,581.3 112.7,580.7 115.0,580.4 117.3,581.9 119.7,580.9 122.1,580.3 124.4,581.7 127.2,584.9 130.0,588.8 132.8,585.1 135.6,583.6 138.4,580.7 141.2,583.5 144.0,583.8 146.9,588.3 149.7,586.0 152.5,584.2 154.8,586.5 157.2,583.4 159.5,584.1 161.8,583.5 164.2,582.7 166.5,582.8 168.8,582.3 171.2,582.5 173.6,581.8 175.9,582.5 178.2,581.5 180.6,581.6 182.9,580.9 185.3,582.7 187.6,578.8 190.0,578.6 192.3,579.1 194.7,580.8 197.0,580.1 199.4,577.9 201.7,578.6 204.0,577.1 206.4,578.8 208.7,577.4 212.1,580.0 215.8,574.2 218.1,575.8 220.5,577.0 222.8,572.9 225.2,574.4 227.5,572.8 229.9,573.9 232.2,574.0 234.6,575.6 236.9,576.4 239.2,574.0 241.6,574.4 243.9,574.5 246.2,574.2 248.6,574.3 250.9,575.5 253.2,576.4 255.6,573.3 257.9,577.2 260.3,572.9 262.6,572.8 265.0,573.0 267.3,573.0 269.7,571.4 272.0,571.5 274.3,571.4 276.7,571.1 279.0,570.5 281.4,572.3 283.7,570.1 286.1,573.0 288.4,572.3 290.8,571.3 293.1,571.6 295.5,570.2 297.8,570.1 300.1,569.7 302.5,569.2 304.9,569.3 307.2,571.2 309.5,568.1 311.9,567.4 314.2,568.2 316.5,567.2 318.9,567.1 321.2,570.2 323.6,566.7 325.9,566.1 328.2,565.7 330.6,565.5 332.9,564.4 335.3,565.0 337.5,564.6 339.8,564.4 342.0,563.5 344.3,562.8 346.5,562.1 349.3,564.0 352.1,566.1 354.4,566.0 356.6,566.3 358.9,566.0 361.1,566.1 363.4,566.9 365.8,568.4 368.1,565.4 370.4,565.4 372.8,565.2 375.1,565.1 377.5,564.4 379.8,565.5 382.2,565.2 384.5,564.7 386.8,564.7 389.2,564.8 391.5,565.7 394.3,563.8 397.2,564.3 400.0,564.4 402.3,562.7 404.7,562.5 407.0,562.8 409.3,561.5 411.7,561.6 414.0,561.3 416.4,562.4 418.7,560.7 421.1,560.2 423.4,561.3 425.8,561.8 428.1,559.8 430.4,561.4 432.6,559.0 434.9,559.4 437.1,560.1 439.4,561.0 442.2,559.7 444.5,558.7 446.9,558.5 449.2,558.1 451.5,558.4 453.9,558.9 456.2,559.1 459.0,556.9 461.9,556.5 464.7,558.1 467.5,561.2 470.3,559.9 472.6,558.5 475.0,558.2 477.4,557.8 479.7,557.8 482.0,556.9 484.4,556.4 486.7,555.6 489.1,555.3 491.4,555.3 493.7,557.0 496.1,555.2 498.4,555.2 500.8,556.6 503.1,556.2 505.4,557.3 507.8,554.0 510.1,555.2 512.5,554.4 516.7,552.8 518.1,557.7 520.9,555.5 523.2,554.7 525.6,554.3 528.0,553.7 530.3,552.7 532.6,552.5 535.0,552.2 537.8,551.8 540.6,552.8 543.0,554.0 545.3,552.4 547.7,554.0 550.0,551.9 552.4,552.9 554.7,553.2 556.9,552.5 559.2,551.3 561.4,551.3 563.7,551.1 565.9,550.3 568.7,558.0 571.1,558.1 573.4,557.1 575.8,556.9 578.1,559.2 580.4,558.2 582.8,557.8 585.1,556.9 587.5,559.4 589.8,558.2 592.2,558.6 594.5,557.2 596.9,557.5 599.2,556.6 601.6,557.0 603.9,556.7 606.2,556.7 608.6,557.2 610.9,556.3 613.2,555.3 615.6,554.2 618.0,554.0 620.3,553.9 622.6,551.9 625.0,551.5 627.3,551.0 629.7,551.1 632.0,550.1 634.3,549.9 636.7,549.9 639.0,549.6 641.4,548.3 643.7,548.0 646.0,547.7 648.4,547.7 650.8,549.4 653.1,548.2 655.3,545.7 657.6,545.4 659.8,544.9 662.1,543.7 664.3,543.8 666.7,543.7 669.1,543.3 671.5,544.1 674.0,543.2 676.4,543.5 678.8,543.8 681.2,543.6 683.6,543.7 686.0,543.3 688.4,543.2 690.9,543.5 693.3,542.4 695.7,543.2 698.1,543.4 700.9,543.5 703.7,546.2 706.5,545.8 709.3,546.3 713.6,549.4 717.8,546.9 720.3,546.1 722.7,545.3 725.2,545.1 727.6,544.2 730.1,543.8 732.6,543.1 735.0,543.1 737.5,542.0 739.9,542.2 742.2,541.4 744.5,542.8 746.9,543.0 749.2,539.3 751.6,541.1 754.4,540.8 757.2,539.8 760.0,539.1 762.6,538.1 765.2,538.8 767.9,536.7 770.5,537.4 772.9,536.4 775.2,536.7 777.6,537.1 779.9,535.6 782.3,533.2 784.6,533.0 787.5,529.8 790.5,526.1 793.4,525.1 795.6,524.2 797.8,523.0 800.0,523.8 802.2,524.6 804.8,522.7 807.5,523.1 810.1,524.0 812.7,521.4 815.2,523.4 817.7,522.9 820.2,523.8 822.8,525.0 825.3,523.1 827.8,524.8 830.3,523.0 832.5,524.3 834.7,523.0 836.9,522.6 839.1,522.1 841.3,522.9 843.5,523.9 845.7,520.6 847.9,521.6 850.1,521.0 852.3,521.9 854.5,519.0 856.7,518.8 858.9,518.1 861.1,518.9 863.3,518.3 865.5,516.9 867.7,517.1 869.9,517.7 872.1,517.3 874.3,516.4 876.5,516.0 878.7,517.0 880.9,519.1 883.1,516.3 885.7,515.3 888.4,513.6 891.0,514.1 893.6,513.1 895.8,512.3 898.0,513.3 900.2,512.9 902.4,513.5 904.6,514.1 906.8,513.4 909.0,512.4 911.2,514.4 913.4,514.7 915.7,512.2 917.9,512.1 920.1,512.8 922.4,510.9 924.6,510.3 926.9,510.5 929.1,509.9 931.3,509.1 933.6,508.8 935.8,508.8 938.0,510.6 940.2,507.8 942.4,507.9 944.6,507.6 946.8,507.9 949.0,506.5 951.2,505.4 953.4,505.2 955.6,504.7 957.8,505.1 960.0,504.6 962.2,505.6 964.4,505.3 966.6,504.8 968.8,506.0 971.0,505.7 973.5,507.2 976.0,504.7 978.5,503.9 981.0,503.3 983.5,504.6 986.0,503.4 988.5,502.1 990.9,501.8 993.2,502.3 995.5,501.8 997.9,500.5 1000.2,500.5 1002.6,501.9 1004.8,498.6 1007.0,498.0 1009.2,497.2 1011.4,497.4 1013.6,496.8 1015.8,499.4 1018.0,497.1 1020.2,495.1 1022.6,494.0 1024.9,493.9 1027.2,492.9 1029.6,492.1 1032.0,491.5 1034.3,490.7 1036.8,488.7 1039.3,490.3 1041.8,488.1 1044.3,488.4 1046.8,488.5 1049.3,488.6 1051.8,488.5 1054.2,490.0 1056.5,489.1 1058.9,491.0 1061.4,490.2 1063.9,490.5 1066.4,489.6 1069.0,490.1 1071.5,490.3 1074.0,490.4 1076.5,489.9 1079.0,490.7 1081.5,492.5 1084.0,490.5 1086.5,490.5 1089.0,490.9 1091.5,490.6 1094.0,491.1 1096.4,491.3 1098.7,493.2 1101.1,494.1 1103.7,491.6 1106.3,493.9 1109.0,491.0 1111.6,491.5 1113.9,491.3 1116.3,489.6 1118.7,489.6 1121.0,490.2 1123.3,489.4 1125.7,488.8 1128.0,490.1 1130.4,491.7 1132.7,491.2 1135.1,489.8 1137.4,488.1 1139.8,487.2 1142.1,486.9 1144.5,486.2 1146.8,486.2 1149.0,485.5 1151.2,485.3 1153.4,485.2 1155.6,484.7 1157.8,483.6 1160.0,485.4 1162.2,483.3 1164.4,482.5 1167.0,484.6 1169.7,482.6 1172.3,483.3 1174.9,484.9" fill="none" stroke="#1fc21f" stroke-width="1.4" stroke-linejoin="round"/>
<polyline points="56.0,587.8 58.4,587.2 60.8,587.6 63.3,586.5 65.7,586.9 68.1,586.3 70.4,585.4 72.8,585.6 75.2,584.5 77.5,584.5 79.8,583.6 82.2,583.1 84.5,583.3 86.9,583.5 89.2,582.2 91.5,582.0 93.9,582.3 96.2,582.4 98.5,581.8 100.9,581.4 103.2,582.1 105.6,580.6 108.0,581.6 110.3,580.7 112.7,580.3 115.0,580.0 117.3,580.0 119.7,580.4 122.1,579.3 124.4,579.6 127.2,583.9 130.0,586.3 132.8,584.7 135.6,582.2 138.4,580.3 141.2,580.8 144.0,581.8 146.9,587.9 149.7,585.6 152.5,583.8 154.8,583.4 157.2,583.0 159.5,583.4 161.8,583.0 164.2,582.2 166.5,582.4 168.8,581.9 171.2,581.9 173.6,581.2 175.9,580.1 178.2,580.6 180.6,579.0 182.9,579.1 185.3,579.2 187.6,578.0 190.0,578.2 192.3,577.2 194.7,577.7 197.0,577.7 199.4,577.3 201.7,577.6 204.0,576.7 206.4,577.1 208.7,576.8 212.1,579.6 215.8,573.8 218.1,573.9 220.5,573.6 222.8,572.5 225.2,573.0 227.5,572.4 229.9,573.5 232.2,573.6 234.6,574.4 236.9,574.4 239.2,573.6 241.6,573.7 243.9,574.1 246.2,573.2 248.6,573.8 250.9,573.4 253.2,573.1 255.6,572.8 257.9,573.6 260.3,572.4 262.6,572.4 265.0,572.3 267.3,572.6 269.7,571.0 272.0,571.0 274.3,570.7 276.7,570.7 279.0,570.1 281.4,570.3 283.7,569.7 286.1,570.0 288.4,570.0 290.8,570.9 293.1,571.1 295.5,569.6 297.8,569.3 300.1,569.0 302.5,568.7 304.9,568.6 307.2,568.4 309.5,567.6 311.9,566.9 314.2,567.2 316.5,566.8 318.9,566.7 321.2,566.9 323.6,566.2 325.9,565.6 328.2,565.3 330.6,565.0 332.9,563.8 335.3,564.6 337.5,564.0 339.8,563.6 342.0,563.1 344.3,562.1 346.5,561.7 349.3,563.1 352.1,565.7 354.4,565.0 356.6,565.2 358.9,565.6 361.1,565.7 363.4,566.1 365.8,565.4 368.1,565.0 370.4,565.0 372.8,564.6 375.1,564.7 377.5,563.9 379.8,565.1 382.2,564.8 384.5,564.1 386.8,564.3 389.2,564.4 391.5,564.4 394.3,563.4 397.2,563.8 400.0,563.3 402.3,562.3 404.7,562.1 407.0,561.3 409.3,561.1 411.7,561.2 414.0,560.9 416.4,561.4 418.7,560.3 421.1,559.8 423.4,560.9 425.8,560.1 428.1,559.3 430.4,559.6 432.6,558.6 434.9,559.0 437.1,559.3 439.4,558.9 442.2,559.3 444.5,558.3 446.9,558.1 449.2,557.5 451.5,558.0 453.9,557.4 456.2,557.4 459.0,556.5 461.9,556.1 464.7,556.6 467.5,560.5 470.3,558.4 472.6,558.0 475.0,557.8 477.4,557.4 479.7,556.4 482.0,556.5 484.4,556.0 486.7,555.2 489.1,554.9 491.4,554.9 493.7,554.5 496.1,554.8 498.4,554.8 500.8,553.8 503.1,554.1 505.4,553.9 507.8,553.5 510.1,552.3 512.5,551.8 516.7,552.4 518.1,556.6 520.9,553.8 523.2,553.9 525.6,553.8 528.0,553.3 530.3,552.3 532.6,552.1 535.0,551.8 537.8,551.2 540.6,552.4 543.0,552.5 545.3,552.0 547.7,551.7 550.0,551.0 552.4,550.3 554.7,550.9 556.9,550.2 559.2,550.7 561.4,550.9 563.7,550.0 565.9,549.9 568.7,557.6 571.1,557.3 573.4,556.5 575.8,556.5 578.1,556.5 580.4,557.6 582.8,557.4 585.1,556.5 587.5,557.5 589.8,557.7 592.2,557.2 594.5,556.8 596.9,557.1 599.2,556.0 601.6,555.4 603.9,556.3 606.2,555.3 608.6,554.7 610.9,554.8 613.2,553.6 615.6,553.8 618.0,553.3 620.3,551.9 622.6,551.5 625.0,551.1 627.3,550.6 629.7,550.6 632.0,549.7 634.3,549.4 636.7,548.6 639.0,549.2 641.4,547.9 643.7,547.6 646.0,547.3 648.4,547.3 650.8,546.2 653.1,546.4 655.3,545.3 657.6,544.9 659.8,544.5 662.1,543.3 664.3,543.4 666.7,543.0 669.1,542.7 671.5,543.7 674.0,542.8 676.4,543.1 678.8,543.4 681.2,543.1 683.6,542.7 686.0,542.9 688.4,542.8 690.9,543.1 693.3,542.0 695.7,542.6 698.1,542.0 700.9,543.1 703.7,544.8 706.5,545.1 709.3,545.9 713.6,549.0 717.8,546.4 720.3,545.2 722.7,544.9 725.2,544.2 727.6,543.7 730.1,543.4 732.6,542.6 735.0,542.2 737.5,541.6 739.9,541.7 742.2,540.9 744.5,540.7 746.9,540.3 749.2,538.8 751.6,538.8 754.4,539.5 757.2,539.4 760.0,538.6 762.6,537.7 765.2,537.3 767.9,535.9 770.5,535.2 772.9,535.0 775.2,535.8 777.6,536.0 779.9,535.0 782.3,532.8 784.6,532.4 787.5,529.4 790.5,525.7 793.4,523.8 795.6,523.8 797.8,522.6 800.0,523.4 802.2,522.5 804.8,522.3 807.5,522.7 810.1,522.2 812.7,521.0 815.2,521.7 817.7,522.0 820.2,522.0 822.8,522.1 825.3,522.5 827.8,523.4 830.3,522.6 832.5,523.0 834.7,522.5 836.9,521.6 839.1,521.7 841.3,521.7 843.5,521.2 845.7,520.2 847.9,521.2 850.1,520.5 852.3,520.3 854.5,518.6 856.7,518.4 858.9,517.7 861.1,518.3 863.3,517.1 865.5,516.5 867.7,516.7 869.9,517.2 872.1,516.9 874.3,516.0 876.5,515.6 878.7,516.5 880.9,515.9 883.1,515.9 885.7,514.1 888.4,513.2 891.0,513.2 893.6,511.9 895.8,511.5 898.0,512.8 900.2,512.5 902.4,512.8 904.6,511.9 906.8,513.0 909.0,512.0 911.2,513.2 913.4,512.3 915.7,511.7 917.9,511.6 920.1,511.8 922.4,510.5 924.6,509.9 926.9,510.1 929.1,509.3 931.3,508.7 933.6,508.4 935.8,507.9 938.0,507.6 940.2,507.4 942.4,506.9 944.6,507.1 946.8,506.0 949.0,505.9 951.2,505.0 953.4,504.8 955.6,504.3 957.8,504.6 960.0,504.2 962.2,505.2 964.4,504.9 966.6,504.3 968.8,504.7 971.0,505.3 973.5,503.7 976.0,504.2 978.5,503.2 981.0,502.9 983.5,502.9 986.0,501.8 988.5,501.5 990.9,501.3 993.2,501.2 995.5,499.9 997.9,500.1 1000.2,499.5 1002.6,498.9 1004.8,498.1 1007.0,497.6 1009.2,496.8 1011.4,496.4 1013.6,495.9 1015.8,496.4 1018.0,495.3 1020.2,494.7 1022.6,493.6 1024.9,493.5 1027.2,492.5 1029.6,491.2 1032.0,489.6 1034.3,488.4 1036.8,488.3 1039.3,488.3 1041.8,487.7 1044.3,487.9 1046.8,487.5 1049.3,488.2 1051.8,488.1 1054.2,488.3 1056.5,488.7 1058.9,490.6 1061.4,489.6 1063.9,489.7 1066.4,489.2 1069.0,489.7 1071.5,489.9 1074.0,489.9 1076.5,489.5 1079.0,490.1 1081.5,489.5 1084.0,490.0 1086.5,490.0 1089.0,490.5 1091.5,490.2 1094.0,490.3 1096.4,490.9 1098.7,491.0 1101.1,491.7 1103.7,491.2 1106.3,491.1 1109.0,490.5 1111.6,490.2 1113.9,490.1 1116.3,489.1 1118.7,488.8 1121.0,489.4 1123.3,487.9 1125.7,488.4 1128.0,488.9 1130.4,488.7 1132.7,490.4 1135.1,489.3 1137.4,487.7 1139.8,486.7 1142.1,486.5 1144.5,485.2 1146.8,485.3 1149.0,484.9 1151.2,484.9 1153.4,484.4 1155.6,484.0 1157.8,483.2 1160.0,483.2 1162.2,482.5 1164.4,482.1 1167.0,481.9 1169.7,482.2 1172.3,482.9 1174.9,483.9" fill="none" stroke="#1020a0" stroke-width="1.5" stroke-linejoin="round"/>
<line x1="57.00" y1="624.40" x2="1175.00" y2="624.40" stroke="#5fd35f" stroke-width="0.80" />
<line x1="126.50" y1="624.20" x2="126.50" y2="620.80" stroke="#1fc21f" stroke-width="1.00" />
<text x="1009" y="618.6" font-size="11.2" fill="#c2c2c2" textLength="95" lengthAdjust="spacingAndGlyphs">Activate Windows</text>
<text x="1009" y="631.6" font-size="6.6" fill="#d4d4d4" textLength="120" lengthAdjust="spacingAndGlyphs">Go to Settings to activate Windows.</text>
<line x1="56.00" y1="635.20" x2="1176.00" y2="635.20" stroke="#e0e0e0" stroke-width="0.60" />
<line x1="53.00" y1="635.90" x2="1202.00" y2="635.90" stroke="#5c5c5c" stroke-width="1.40" />
</svg>
</body></html>
